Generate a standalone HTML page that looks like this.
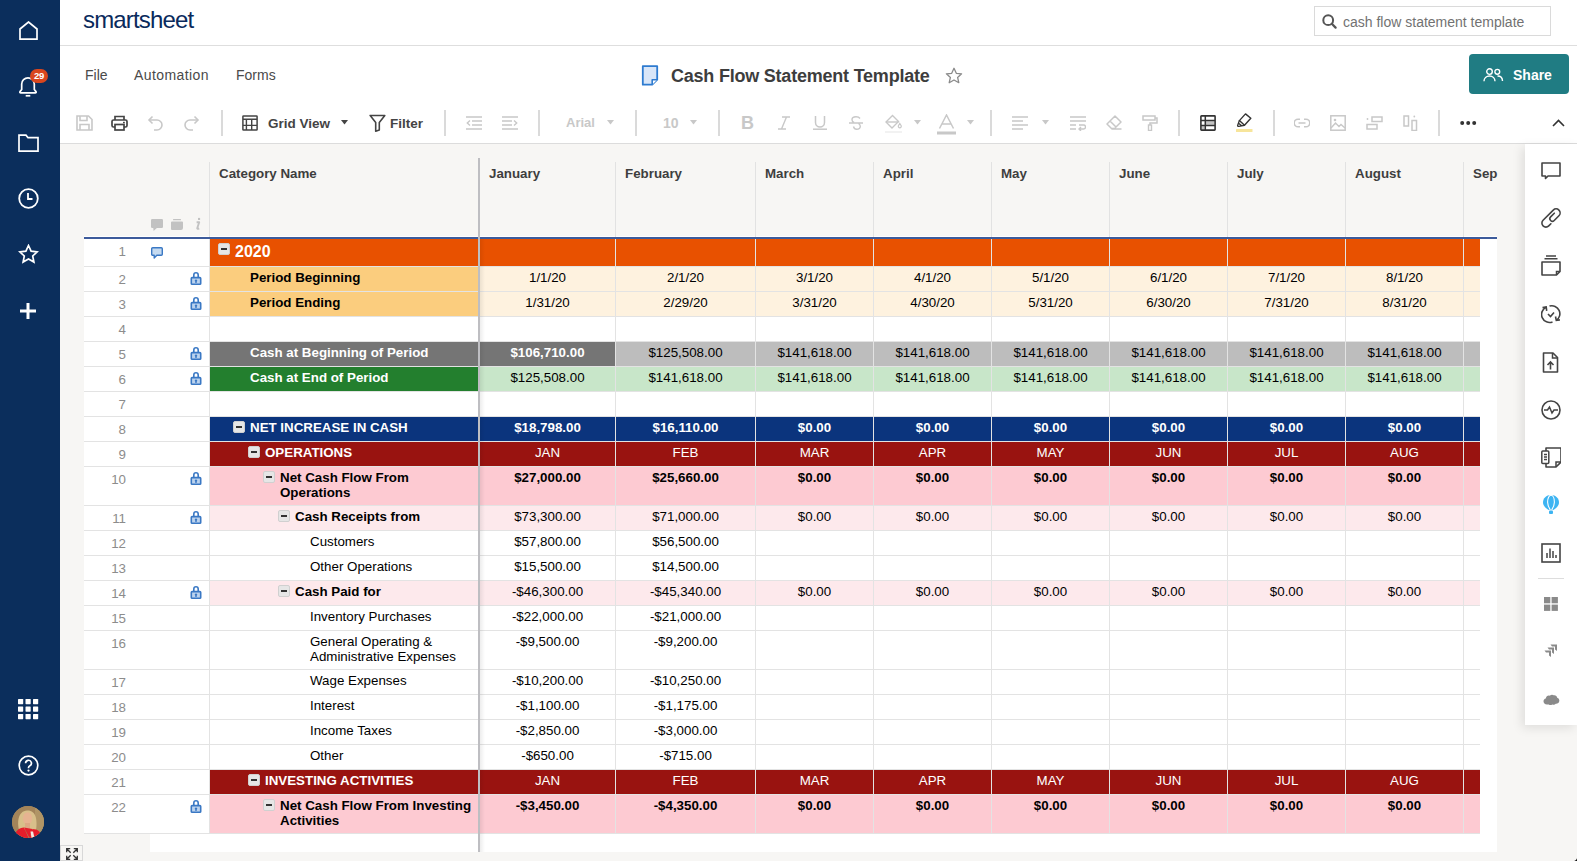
<!DOCTYPE html><html><head><meta charset="utf-8"><style>
*{margin:0;padding:0;box-sizing:border-box}
html,body{width:1577px;height:861px;overflow:hidden;background:#F7F6F4;font-family:"Liberation Sans", sans-serif;position:relative}
.a{position:absolute}
.t{position:absolute;white-space:nowrap;line-height:15px}
.cell{position:absolute;overflow:hidden}
.box{position:absolute;width:12px;height:12px;background:#E6E6E6;border-radius:2px;border:1px solid #D0D0D0}
.box:after{content:"";position:absolute;left:2px;top:4px;width:6px;height:2px;background:#333}

</style></head><body>
<div class="a" style="left:60px;top:0;width:1517px;height:46px;background:#fff;border-bottom:1px solid #DEDEDE"></div>
<div class="t" style="left:83px;top:5px;font-size:24px;line-height:30px;color:#0A2A5C;letter-spacing:-0.85px">smartsheet</div>
<div class="a" style="left:1314px;top:6px;width:237px;height:30px;border:1px solid #DADADA;background:#fff"></div>
<svg width="15" height="15" viewBox="0 0 15 15" class="a" style="left:1322px;top:14px"><circle cx="6.2" cy="6.2" r="4.9" fill="none" stroke="#555" stroke-width="2"/><path d="M9.8 9.8L13.6 13.6" stroke="#555" stroke-width="2.2" stroke-linecap="round"/></svg>
<div class="t" style="left:1343px;top:15px;font-size:14px;color:#727272">cash flow statement template</div>
<div class="a" style="left:60px;top:46px;width:1517px;height:98px;background:#fff;border-bottom:1px solid #DCDCDC"></div>
<div class="t" style="left:85px;top:68px;font-size:14px;color:#4A4A4A">File</div>
<div class="t" style="left:134px;top:68px;font-size:14px;color:#4A4A4A;letter-spacing:0.4px">Automation</div>
<div class="t" style="left:236px;top:68px;font-size:14px;color:#4A4A4A">Forms</div>
<svg width="18" height="21" viewBox="0 0 18 21" class="a" style="left:641px;top:65px"><path d="M1.8 1.2h14.4v13.5l-5 5H1.8z" fill="#D9E6F8" stroke="#2E7BD0" stroke-width="1.8" stroke-linejoin="round"/><path d="M16.2 14.7h-5v5" fill="#fff" stroke="#2E7BD0" stroke-width="1.6" stroke-linejoin="round"/></svg>
<div class="t" style="left:671px;top:65px;font-size:18px;line-height:22px;font-weight:bold;color:#3D3D3D;letter-spacing:-0.22px">Cash Flow Statement Template</div>
<svg width="18" height="18" viewBox="0 0 18 18" class="a" style="left:945px;top:67px"><path d="M9 1.3l2.3 5 5.3.5-4 3.6 1.2 5.3L9 13l-4.8 2.7 1.2-5.3-4-3.6 5.3-.5z" fill="none" stroke="#8A8A8A" stroke-width="1.3" stroke-linejoin="round"/></svg>
<div class="a" style="left:1469px;top:54px;width:100px;height:40px;background:#207C83;border-radius:4px"></div>
<svg width="21" height="14" viewBox="0 0 21 14" class="a" style="left:1483px;top:68px"><circle cx="6.5" cy="3.6" r="2.8" fill="none" stroke="#fff" stroke-width="1.4"/><path d="M1 13.3c0-3.2 2.4-5.3 5.5-5.3s5.5 2.1 5.5 5.3" fill="none" stroke="#fff" stroke-width="1.4"/><circle cx="14.3" cy="3.8" r="2.4" fill="none" stroke="#fff" stroke-width="1.4"/><path d="M14.5 8c2.9 0 5 1.9 5 5" fill="none" stroke="#fff" stroke-width="1.4"/></svg>
<div class="t" style="left:1513px;top:68px;font-size:14px;font-weight:bold;color:#fff">Share</div>
<svg width="17" height="16" viewBox="0 0 17 16" class="a" style="left:76px;top:115px"><path d="M1 1h11.5L16 4.5V15H1z" fill="none" stroke="#C8C8C8" stroke-width="1.6"/><path d="M4 1v4.5h7V1M4 15V9.5h9V15" fill="none" stroke="#C8C8C8" stroke-width="1.6"/></svg>
<svg width="17" height="16" viewBox="0 0 17 16" class="a" style="left:111px;top:115px"><path d="M4 5V1.5h9V5" fill="none" stroke="#444" stroke-width="1.7"/><rect x="1" y="5" width="15" height="7" rx="1.5" fill="none" stroke="#444" stroke-width="1.7"/><rect x="4" y="9.5" width="9" height="5.5" fill="#fff" stroke="#444" stroke-width="1.7"/><rect x="12" y="6.8" width="1.8" height="1.5" fill="#444"/></svg>
<svg width="17" height="16" viewBox="0 0 17 16" class="a" style="left:147px;top:115px"><path d="M5.5 1.5L2 5l3.5 3.5" fill="none" stroke="#C8C8C8" stroke-width="1.6"/><path d="M2.3 5H10a5 5 0 0 1 0 10H7" fill="none" stroke="#C8C8C8" stroke-width="1.6"/></svg>
<svg width="17" height="16" viewBox="0 0 17 16" class="a" style="left:183px;top:115px"><path d="M11.5 1.5L15 5l-3.5 3.5" fill="none" stroke="#C8C8C8" stroke-width="1.6"/><path d="M14.7 5H7a5 5 0 0 0 0 10h3" fill="none" stroke="#C8C8C8" stroke-width="1.6"/></svg>
<div class="a" style="left:221px;top:110px;width:2px;height:26px;background:#DADADA"></div>
<svg width="16" height="16" viewBox="0 0 16 16" class="a" style="left:242px;top:115px"><rect x="0.9" y="0.9" width="14.2" height="14.2" rx="0.6" fill="none" stroke="#444" stroke-width="1.5"/><path d="M1 4.2h14M1 10.4h14M4.4 4.2V15M9.7 4.2V15" stroke="#444" stroke-width="1.4"/></svg>
<div class="t" style="left:268px;top:116px;font-size:13.5px;font-weight:bold;color:#444">Grid View</div>
<svg width="7" height="5" viewBox="0 0 7 5" class="a" style="left:341px;top:120px"><path d="M0 0h7L3.5 4.5z" fill="#444"/></svg>
<svg width="17" height="18" viewBox="0 0 17 18" class="a" style="left:369px;top:114px"><path d="M1.2 1.5h14.6l-5.5 7v7.5l-3.6 1.2V8.5z" fill="none" stroke="#444" stroke-width="1.6" stroke-linejoin="round"/></svg>
<div class="t" style="left:390px;top:116px;font-size:13.5px;font-weight:bold;color:#444">Filter</div>
<div class="a" style="left:444px;top:110px;width:2px;height:26px;background:#DADADA"></div>
<svg width="16" height="14" viewBox="0 0 16 14" class="a" style="left:466px;top:116px"><path d="M0 1h16M6 5h10M6 9h10M0 13h16" stroke="#C8C8C8" stroke-width="1.3"/><path d="M4 4.5L1.3 7 4 9.5" fill="none" stroke="#C8C8C8" stroke-width="1.4"/></svg>
<svg width="16" height="14" viewBox="0 0 16 14" class="a" style="left:502px;top:116px"><path d="M0 1h16M0 5h10M0 9h10M0 13h16" stroke="#C8C8C8" stroke-width="1.3"/><path d="M12 4.5L14.7 7 12 9.5" fill="none" stroke="#C8C8C8" stroke-width="1.4"/></svg>
<div class="a" style="left:538px;top:110px;width:2px;height:26px;background:#DADADA"></div>
<div class="t" style="left:566px;top:115px;font-size:13px;font-weight:bold;color:#C8C8C8">Arial</div>
<svg width="7" height="5" viewBox="0 0 7 5" class="a" style="left:607px;top:120px"><path d="M0 0h7L3.5 4.5z" fill="#C8C8C8"/></svg>
<div class="a" style="left:635px;top:110px;width:2px;height:26px;background:#DADADA"></div>
<div class="t" style="left:663px;top:116px;font-size:14px;font-weight:bold;color:#C8C8C8">10</div>
<svg width="7" height="5" viewBox="0 0 7 5" class="a" style="left:690px;top:120px"><path d="M0 0h7L3.5 4.5z" fill="#C8C8C8"/></svg>
<div class="a" style="left:718px;top:110px;width:2px;height:26px;background:#DADADA"></div>
<div class="t" style="left:741px;top:114px;font-size:18px;line-height:18px;font-weight:bold;color:#C8C8C8">B</div>
<svg width="12" height="14" viewBox="0 0 12 14" class="a" style="left:778px;top:116px"><path d="M4 1h8M0 13h8M8.5 1L3.5 13" stroke="#C8C8C8" stroke-width="1.4" fill="none"/></svg>
<svg width="14" height="14" viewBox="0 0 14 14" class="a" style="left:813px;top:116px"><path d="M2.5 0v6.5a4.5 4.5 0 0 0 9 0V0" stroke="#C8C8C8" stroke-width="1.5" fill="none"/><path d="M0 13.2h14" stroke="#C8C8C8" stroke-width="1.5"/></svg>
<svg width="14" height="14" viewBox="0 0 14 14" class="a" style="left:849px;top:116px"><path d="M11 2.5C10 1 8.8.8 7 .8 4.5.8 3 2 3 3.8c0 1.5 1 2.2 2 2.7M4.5 10.5c.5 1.8 1.8 2.7 3 2.7 2.5 0 3.8-1.3 3.8-3 0-1.2-.6-2-1.8-2.7M0 7h14" stroke="#C8C8C8" stroke-width="1.4" fill="none"/></svg>
<svg width="17" height="19" viewBox="0 0 17 19" class="a" style="left:885px;top:114px"><path d="M7.5 1.5L1 8l6 6 6.5-6.5z" stroke="#C8C8C8" stroke-width="1.4" fill="none"/><path d="M1 8h12.5" stroke="#C8C8C8" stroke-width="1.4"/><path d="M14.8 9.5l1.4 2.3a1.5 1.5 0 1 1-2.8 0z" stroke="#C8C8C8" stroke-width="1.2" fill="none"/><rect x="0" y="17" width="17" height="2" fill="#F2F2F2"/></svg>
<svg width="7" height="5" viewBox="0 0 7 5" class="a" style="left:914px;top:120px"><path d="M0 0h7L3.5 4.5z" fill="#C8C8C8"/></svg>
<svg width="19" height="21" viewBox="0 0 19 21" class="a" style="left:937px;top:114px"><path d="M2.5 14.5L9.5 1l7 13.5M5 10h9" stroke="#C8C8C8" stroke-width="1.5" fill="none"/><rect x="0" y="17.5" width="19" height="3" fill="#C8C8C8"/></svg>
<svg width="7" height="5" viewBox="0 0 7 5" class="a" style="left:967px;top:120px"><path d="M0 0h7L3.5 4.5z" fill="#C8C8C8"/></svg>
<div class="a" style="left:990px;top:110px;width:2px;height:26px;background:#DADADA"></div>
<svg width="16" height="14" viewBox="0 0 16 14" class="a" style="left:1012px;top:116px"><path d="M0 1h16M0 5h11M0 9h16M0 13h11" stroke="#C8C8C8" stroke-width="1.5"/></svg>
<svg width="7" height="5" viewBox="0 0 7 5" class="a" style="left:1042px;top:120px"><path d="M0 0h7L3.5 4.5z" fill="#C8C8C8"/></svg>
<svg width="16" height="15" viewBox="0 0 16 15" class="a" style="left:1070px;top:116px"><path d="M0 1h16M0 5h16M0 9h6M0 13h6" stroke="#C8C8C8" stroke-width="1.5"/><path d="M9 9h4.5a2 2 0 0 1 0 4H10M11 11l-2 2 2 2" stroke="#C8C8C8" stroke-width="1.4" fill="none"/></svg>
<svg width="16" height="15" viewBox="0 0 16 15" class="a" style="left:1106px;top:115px"><path d="M5.5 13.5L1 9l8-8 6 6-6.5 6.5zM4 6l6 6M5.5 14h10" stroke="#C8C8C8" stroke-width="1.5" fill="none" stroke-linejoin="round"/></svg>
<svg width="16" height="16" viewBox="0 0 16 16" class="a" style="left:1142px;top:115px"><rect x="1" y="1" width="12" height="4" stroke="#C8C8C8" stroke-width="1.5" fill="none"/><path d="M13 3h2v5H8v2" stroke="#C8C8C8" stroke-width="1.5" fill="none"/><rect x="6.5" y="10" width="3" height="5.5" stroke="#C8C8C8" stroke-width="1.4" fill="none"/></svg>
<div class="a" style="left:1178px;top:110px;width:2px;height:26px;background:#DADADA"></div>
<svg width="16" height="16" viewBox="0 0 16 16" class="a" style="left:1200px;top:115px"><rect x="6" y="6.2" width="8.4" height="3.6" fill="#C4C4C4"/><rect x="1.6" y="11.2" width="3" height="3.2" fill="#C4C4C4"/><rect x="0.9" y="0.9" width="14.2" height="14.2" rx="0.6" fill="none" stroke="#333" stroke-width="1.6"/><path d="M1 5.4h14M1 10.5h14M5.3 1v14" stroke="#333" stroke-width="1.5"/></svg>
<svg width="18" height="20" viewBox="0 0 18 20" class="a" style="left:1236px;top:113px"><path d="M3.4 7.6L9.5 0.9 14.8 5.3 8.5 12.3z" fill="none" stroke="#333" stroke-width="1.4" stroke-linejoin="round"/><path d="M3.4 7.6L1.6 12.4Q1.6 13.6 2.8 13.4L8.5 12.3M2.6 10.2l3.4 2.7" fill="none" stroke="#333" stroke-width="1.3" stroke-linejoin="round"/><rect x="0" y="15.9" width="16.5" height="3" rx="0.5" fill="#F7E59B"/></svg>
<div class="a" style="left:1273px;top:110px;width:2px;height:26px;background:#DADADA"></div>
<svg width="16" height="10" viewBox="0 0 16 10" class="a" style="left:1294px;top:118px"><path d="M6 1.2H4a3.8 3.8 0 0 0 0 7.6h2M10 1.2h2a3.8 3.8 0 0 1 0 7.6h-2M4.5 5h7" stroke="#C8C8C8" stroke-width="1.5" fill="none"/></svg>
<svg width="16" height="16" viewBox="0 0 16 16" class="a" style="left:1330px;top:115px"><rect x="0.8" y="0.8" width="14.4" height="14.4" stroke="#C8C8C8" stroke-width="1.5" fill="none"/><path d="M1 13l4.5-5 3.5 3.5 2-2 4 3.5" stroke="#C8C8C8" stroke-width="1.4" fill="none"/><circle cx="5" cy="5" r="1.3" fill="#C8C8C8"/></svg>
<svg width="17" height="14" viewBox="0 0 17 14" class="a" style="left:1366px;top:116px"><rect x="6" y="1" width="10" height="4.5" stroke="#C8C8C8" stroke-width="1.5" fill="none"/><rect x="1" y="8.5" width="10" height="4.5" stroke="#C8C8C8" stroke-width="1.5" fill="none"/><circle cx="1.5" cy="3" r="0.9" fill="#C8C8C8"/></svg>
<svg width="15" height="16" viewBox="0 0 15 16" class="a" style="left:1403px;top:115px"><rect x="1" y="1" width="4.5" height="10" stroke="#C8C8C8" stroke-width="1.5" fill="none"/><rect x="9" y="5.5" width="4.5" height="10" stroke="#C8C8C8" stroke-width="1.5" fill="none"/><circle cx="11.3" cy="1.5" r="0.9" fill="#C8C8C8"/></svg>
<div class="a" style="left:1438px;top:110px;width:2px;height:26px;background:#DADADA"></div>
<svg width="17" height="6" viewBox="0 0 17 6" class="a" style="left:1460px;top:120px"><circle cx="2.2" cy="3" r="2" fill="#333"/><circle cx="8.2" cy="3" r="2" fill="#333"/><circle cx="14.2" cy="3" r="2" fill="#333"/></svg>
<svg width="13" height="8" viewBox="0 0 13 8" class="a" style="left:1552px;top:119px"><path d="M1 7l5.5-5.5L12 7" stroke="#333" stroke-width="1.6" fill="none"/></svg>
<div class="a" style="left:84px;top:144px;width:1413px;height:92px;background:#F7F6F4"></div>
<div class="a" style="left:84px;top:236px;width:1413px;height:1px;background:#fff"></div>
<div class="a" style="left:615px;top:162px;width:1px;height:75px;background:#E2E2E2"></div>
<div class="a" style="left:755px;top:162px;width:1px;height:75px;background:#E2E2E2"></div>
<div class="a" style="left:873px;top:162px;width:1px;height:75px;background:#E2E2E2"></div>
<div class="a" style="left:991px;top:162px;width:1px;height:75px;background:#E2E2E2"></div>
<div class="a" style="left:1109px;top:162px;width:1px;height:75px;background:#E2E2E2"></div>
<div class="a" style="left:1227px;top:162px;width:1px;height:75px;background:#E2E2E2"></div>
<div class="a" style="left:1345px;top:162px;width:1px;height:75px;background:#E2E2E2"></div>
<div class="a" style="left:1463px;top:162px;width:1px;height:75px;background:#E2E2E2"></div>
<div class="a" style="left:209px;top:162px;width:1px;height:75px;background:#E2E2E2"></div>
<div class="t" style="left:219px;top:166px;font-size:13.333px;font-weight:bold;color:#3E3E3E">Category Name</div>
<div class="t" style="left:489px;top:166px;font-size:13.333px;font-weight:bold;color:#3E3E3E">January</div>
<div class="t" style="left:625px;top:166px;font-size:13.333px;font-weight:bold;color:#3E3E3E">February</div>
<div class="t" style="left:765px;top:166px;font-size:13.333px;font-weight:bold;color:#3E3E3E">March</div>
<div class="t" style="left:883px;top:166px;font-size:13.333px;font-weight:bold;color:#3E3E3E">April</div>
<div class="t" style="left:1001px;top:166px;font-size:13.333px;font-weight:bold;color:#3E3E3E">May</div>
<div class="t" style="left:1119px;top:166px;font-size:13.333px;font-weight:bold;color:#3E3E3E">June</div>
<div class="t" style="left:1237px;top:166px;font-size:13.333px;font-weight:bold;color:#3E3E3E">July</div>
<div class="t" style="left:1355px;top:166px;font-size:13.333px;font-weight:bold;color:#3E3E3E">August</div>
<div class="t" style="left:1473px;top:166px;font-size:13.333px;font-weight:bold;color:#3E3E3E">Sep</div>
<svg width="14" height="14" viewBox="0 0 14 14" class="a" style="left:150px;top:218px"><rect x="1" y="1" width="12" height="9" rx="1.2" fill="#C2C2C2"/><path d="M3.2 9.5L3.6 13 7.4 9.5z" fill="#C2C2C2"/></svg>
<svg width="14" height="13" viewBox="0 0 14 13" class="a" style="left:170px;top:218px"><rect x="3" y="0.9" width="8" height="1.4" rx="0.5" fill="#C2C2C2"/><path d="M1 4.5a1 1 0 0 1 1-1h10a1 1 0 0 1 1 1V10a2 2 0 0 1-2 2H2a1 1 0 0 1-1-1z" fill="#C2C2C2"/></svg>
<svg width="7" height="14" viewBox="0 0 7 14" class="a" style="left:195px;top:217px"><rect x="3" y="0.9" width="2.1" height="2.1" fill="#C2C2C2"/><path d="M1.6 5.3h2.6L2.3 11c-.3.9.3 1.2 1.9.3" fill="none" stroke="#C2C2C2" stroke-width="1.9" stroke-linejoin="round"/></svg>
<div class="a" style="left:84px;top:237px;width:1413px;height:2px;background:#3D5B9B"></div>
<div class="a" style="left:1480px;top:239px;width:17px;height:613px;background:#fff"></div>
<div class="a" style="left:150px;top:834px;width:1347px;height:18px;background:#fff"></div>
<div class="a" style="left:84px;top:239px;width:125px;height:27px;background:#fff"></div>
<div class="a" style="left:84px;top:266px;width:1396px;height:1px;background:#E3E3E3"></div>
<div class="t" style="left:84px;width:42px;text-align:right;top:244px;font-size:13.333px;color:#8C8C8C">1</div>
<div class="a" style="left:151px;top:245px"><svg width="12" height="12" viewBox="0 0 12 12" ><path d="M1.7 0.7h8.6a1 1 0 0 1 1 1v5.6a1 1 0 0 1-1 1H5.8L3.2 10.9V8.3H1.7a1 1 0 0 1-1-1V1.7a1 1 0 0 1 1-1z" fill="#C5DAF0" stroke="#3A78C4" stroke-width="1.4" stroke-linejoin="round"/></svg></div>
<div class="a" style="left:209px;top:239px;width:1px;height:28px;background:#E3E3E3"></div>
<div class="a" style="left:210px;top:239px;width:268px;height:27px;background:#E85100"></div>
<div class="box" style="left:218px;top:243px"></div>
<div class="t" style="left:235px;top:243px;font-size:16px;line-height:18px;font-weight:bold;color:#fff">2020</div>
<div class="a" style="left:480px;top:239px;width:135px;height:27px;background:#E85100"></div>
<div class="a" style="left:616px;top:239px;width:139px;height:27px;background:#E85100"></div>
<div class="a" style="left:756px;top:239px;width:117px;height:27px;background:#E85100"></div>
<div class="a" style="left:874px;top:239px;width:117px;height:27px;background:#E85100"></div>
<div class="a" style="left:992px;top:239px;width:117px;height:27px;background:#E85100"></div>
<div class="a" style="left:1110px;top:239px;width:117px;height:27px;background:#E85100"></div>
<div class="a" style="left:1228px;top:239px;width:117px;height:27px;background:#E85100"></div>
<div class="a" style="left:1346px;top:239px;width:117px;height:27px;background:#E85100"></div>
<div class="a" style="left:1464px;top:239px;width:16px;height:27px;background:#E85100"></div>
<div class="a" style="left:615px;top:239px;width:1px;height:28px;background:#E3E3E3"></div>
<div class="a" style="left:755px;top:239px;width:1px;height:28px;background:#E3E3E3"></div>
<div class="a" style="left:873px;top:239px;width:1px;height:28px;background:#E3E3E3"></div>
<div class="a" style="left:991px;top:239px;width:1px;height:28px;background:#E3E3E3"></div>
<div class="a" style="left:1109px;top:239px;width:1px;height:28px;background:#E3E3E3"></div>
<div class="a" style="left:1227px;top:239px;width:1px;height:28px;background:#E3E3E3"></div>
<div class="a" style="left:1345px;top:239px;width:1px;height:28px;background:#E3E3E3"></div>
<div class="a" style="left:1463px;top:239px;width:1px;height:28px;background:#E3E3E3"></div>
<div class="a" style="left:84px;top:267px;width:125px;height:24px;background:#fff"></div>
<div class="a" style="left:84px;top:291px;width:1396px;height:1px;background:#E3E3E3"></div>
<div class="t" style="left:84px;width:42px;text-align:right;top:272px;font-size:13.333px;color:#8C8C8C">2</div>
<div class="a" style="left:190px;top:271px"><svg width="12" height="14" viewBox="0 0 12 14" ><path d="M3.8 7V4a2.2 2.2 0 0 1 4.4 0v3" fill="none" stroke="#3A78C4" stroke-width="1.6"/><rect x="1.3" y="6.6" width="9.4" height="6.6" rx="0.8" fill="#BCD3EE" stroke="#3A78C4" stroke-width="1.6"/><path d="M6 8.4a1.2 1.2 0 0 1 .7 2.2l.3 1.2H5l.3-1.2A1.2 1.2 0 0 1 6 8.4z" fill="#3A78C4"/></svg></div>
<div class="a" style="left:209px;top:267px;width:1px;height:25px;background:#E3E3E3"></div>
<div class="a" style="left:210px;top:267px;width:268px;height:24px;background:#FBCD7E"></div>
<div class="t" style="left:250px;top:270px;font-size:13.333px;line-height:15px;font-weight:bold;color:#000">Period Beginning</div>
<div class="a" style="left:480px;top:267px;width:135px;height:24px;background:#FEF2DF"></div>
<div class="t" style="left:480px;width:135px;text-align:center;top:270px;font-size:13.333px;font-weight:normal;color:#000">1/1/20</div>
<div class="a" style="left:616px;top:267px;width:139px;height:24px;background:#FEF2DF"></div>
<div class="t" style="left:616px;width:139px;text-align:center;top:270px;font-size:13.333px;font-weight:normal;color:#000">2/1/20</div>
<div class="a" style="left:756px;top:267px;width:117px;height:24px;background:#FEF2DF"></div>
<div class="t" style="left:756px;width:117px;text-align:center;top:270px;font-size:13.333px;font-weight:normal;color:#000">3/1/20</div>
<div class="a" style="left:874px;top:267px;width:117px;height:24px;background:#FEF2DF"></div>
<div class="t" style="left:874px;width:117px;text-align:center;top:270px;font-size:13.333px;font-weight:normal;color:#000">4/1/20</div>
<div class="a" style="left:992px;top:267px;width:117px;height:24px;background:#FEF2DF"></div>
<div class="t" style="left:992px;width:117px;text-align:center;top:270px;font-size:13.333px;font-weight:normal;color:#000">5/1/20</div>
<div class="a" style="left:1110px;top:267px;width:117px;height:24px;background:#FEF2DF"></div>
<div class="t" style="left:1110px;width:117px;text-align:center;top:270px;font-size:13.333px;font-weight:normal;color:#000">6/1/20</div>
<div class="a" style="left:1228px;top:267px;width:117px;height:24px;background:#FEF2DF"></div>
<div class="t" style="left:1228px;width:117px;text-align:center;top:270px;font-size:13.333px;font-weight:normal;color:#000">7/1/20</div>
<div class="a" style="left:1346px;top:267px;width:117px;height:24px;background:#FEF2DF"></div>
<div class="t" style="left:1346px;width:117px;text-align:center;top:270px;font-size:13.333px;font-weight:normal;color:#000">8/1/20</div>
<div class="a" style="left:1464px;top:267px;width:16px;height:24px;background:#FEF2DF"></div>
<div class="a" style="left:615px;top:267px;width:1px;height:25px;background:#E3E3E3"></div>
<div class="a" style="left:755px;top:267px;width:1px;height:25px;background:#E3E3E3"></div>
<div class="a" style="left:873px;top:267px;width:1px;height:25px;background:#E3E3E3"></div>
<div class="a" style="left:991px;top:267px;width:1px;height:25px;background:#E3E3E3"></div>
<div class="a" style="left:1109px;top:267px;width:1px;height:25px;background:#E3E3E3"></div>
<div class="a" style="left:1227px;top:267px;width:1px;height:25px;background:#E3E3E3"></div>
<div class="a" style="left:1345px;top:267px;width:1px;height:25px;background:#E3E3E3"></div>
<div class="a" style="left:1463px;top:267px;width:1px;height:25px;background:#E3E3E3"></div>
<div class="a" style="left:84px;top:292px;width:125px;height:24px;background:#fff"></div>
<div class="a" style="left:84px;top:316px;width:1396px;height:1px;background:#E3E3E3"></div>
<div class="t" style="left:84px;width:42px;text-align:right;top:297px;font-size:13.333px;color:#8C8C8C">3</div>
<div class="a" style="left:190px;top:296px"><svg width="12" height="14" viewBox="0 0 12 14" ><path d="M3.8 7V4a2.2 2.2 0 0 1 4.4 0v3" fill="none" stroke="#3A78C4" stroke-width="1.6"/><rect x="1.3" y="6.6" width="9.4" height="6.6" rx="0.8" fill="#BCD3EE" stroke="#3A78C4" stroke-width="1.6"/><path d="M6 8.4a1.2 1.2 0 0 1 .7 2.2l.3 1.2H5l.3-1.2A1.2 1.2 0 0 1 6 8.4z" fill="#3A78C4"/></svg></div>
<div class="a" style="left:209px;top:292px;width:1px;height:25px;background:#E3E3E3"></div>
<div class="a" style="left:210px;top:292px;width:268px;height:24px;background:#FBCD7E"></div>
<div class="t" style="left:250px;top:295px;font-size:13.333px;line-height:15px;font-weight:bold;color:#000">Period Ending</div>
<div class="a" style="left:480px;top:292px;width:135px;height:24px;background:#FEF2DF"></div>
<div class="t" style="left:480px;width:135px;text-align:center;top:295px;font-size:13.333px;font-weight:normal;color:#000">1/31/20</div>
<div class="a" style="left:616px;top:292px;width:139px;height:24px;background:#FEF2DF"></div>
<div class="t" style="left:616px;width:139px;text-align:center;top:295px;font-size:13.333px;font-weight:normal;color:#000">2/29/20</div>
<div class="a" style="left:756px;top:292px;width:117px;height:24px;background:#FEF2DF"></div>
<div class="t" style="left:756px;width:117px;text-align:center;top:295px;font-size:13.333px;font-weight:normal;color:#000">3/31/20</div>
<div class="a" style="left:874px;top:292px;width:117px;height:24px;background:#FEF2DF"></div>
<div class="t" style="left:874px;width:117px;text-align:center;top:295px;font-size:13.333px;font-weight:normal;color:#000">4/30/20</div>
<div class="a" style="left:992px;top:292px;width:117px;height:24px;background:#FEF2DF"></div>
<div class="t" style="left:992px;width:117px;text-align:center;top:295px;font-size:13.333px;font-weight:normal;color:#000">5/31/20</div>
<div class="a" style="left:1110px;top:292px;width:117px;height:24px;background:#FEF2DF"></div>
<div class="t" style="left:1110px;width:117px;text-align:center;top:295px;font-size:13.333px;font-weight:normal;color:#000">6/30/20</div>
<div class="a" style="left:1228px;top:292px;width:117px;height:24px;background:#FEF2DF"></div>
<div class="t" style="left:1228px;width:117px;text-align:center;top:295px;font-size:13.333px;font-weight:normal;color:#000">7/31/20</div>
<div class="a" style="left:1346px;top:292px;width:117px;height:24px;background:#FEF2DF"></div>
<div class="t" style="left:1346px;width:117px;text-align:center;top:295px;font-size:13.333px;font-weight:normal;color:#000">8/31/20</div>
<div class="a" style="left:1464px;top:292px;width:16px;height:24px;background:#FEF2DF"></div>
<div class="a" style="left:615px;top:292px;width:1px;height:25px;background:#E3E3E3"></div>
<div class="a" style="left:755px;top:292px;width:1px;height:25px;background:#E3E3E3"></div>
<div class="a" style="left:873px;top:292px;width:1px;height:25px;background:#E3E3E3"></div>
<div class="a" style="left:991px;top:292px;width:1px;height:25px;background:#E3E3E3"></div>
<div class="a" style="left:1109px;top:292px;width:1px;height:25px;background:#E3E3E3"></div>
<div class="a" style="left:1227px;top:292px;width:1px;height:25px;background:#E3E3E3"></div>
<div class="a" style="left:1345px;top:292px;width:1px;height:25px;background:#E3E3E3"></div>
<div class="a" style="left:1463px;top:292px;width:1px;height:25px;background:#E3E3E3"></div>
<div class="a" style="left:84px;top:317px;width:125px;height:24px;background:#fff"></div>
<div class="a" style="left:84px;top:341px;width:1396px;height:1px;background:#E3E3E3"></div>
<div class="t" style="left:84px;width:42px;text-align:right;top:322px;font-size:13.333px;color:#8C8C8C">4</div>
<div class="a" style="left:209px;top:317px;width:1px;height:25px;background:#E3E3E3"></div>
<div class="a" style="left:210px;top:317px;width:268px;height:24px;background:#FFFFFF"></div>
<div class="a" style="left:480px;top:317px;width:135px;height:24px;background:#FFFFFF"></div>
<div class="a" style="left:616px;top:317px;width:139px;height:24px;background:#FFFFFF"></div>
<div class="a" style="left:756px;top:317px;width:117px;height:24px;background:#FFFFFF"></div>
<div class="a" style="left:874px;top:317px;width:117px;height:24px;background:#FFFFFF"></div>
<div class="a" style="left:992px;top:317px;width:117px;height:24px;background:#FFFFFF"></div>
<div class="a" style="left:1110px;top:317px;width:117px;height:24px;background:#FFFFFF"></div>
<div class="a" style="left:1228px;top:317px;width:117px;height:24px;background:#FFFFFF"></div>
<div class="a" style="left:1346px;top:317px;width:117px;height:24px;background:#FFFFFF"></div>
<div class="a" style="left:1464px;top:317px;width:16px;height:24px;background:#FFFFFF"></div>
<div class="a" style="left:615px;top:317px;width:1px;height:25px;background:#E3E3E3"></div>
<div class="a" style="left:755px;top:317px;width:1px;height:25px;background:#E3E3E3"></div>
<div class="a" style="left:873px;top:317px;width:1px;height:25px;background:#E3E3E3"></div>
<div class="a" style="left:991px;top:317px;width:1px;height:25px;background:#E3E3E3"></div>
<div class="a" style="left:1109px;top:317px;width:1px;height:25px;background:#E3E3E3"></div>
<div class="a" style="left:1227px;top:317px;width:1px;height:25px;background:#E3E3E3"></div>
<div class="a" style="left:1345px;top:317px;width:1px;height:25px;background:#E3E3E3"></div>
<div class="a" style="left:1463px;top:317px;width:1px;height:25px;background:#E3E3E3"></div>
<div class="a" style="left:84px;top:342px;width:125px;height:24px;background:#fff"></div>
<div class="a" style="left:84px;top:366px;width:1396px;height:1px;background:#E3E3E3"></div>
<div class="t" style="left:84px;width:42px;text-align:right;top:347px;font-size:13.333px;color:#8C8C8C">5</div>
<div class="a" style="left:190px;top:346px"><svg width="12" height="14" viewBox="0 0 12 14" ><path d="M3.8 7V4a2.2 2.2 0 0 1 4.4 0v3" fill="none" stroke="#3A78C4" stroke-width="1.6"/><rect x="1.3" y="6.6" width="9.4" height="6.6" rx="0.8" fill="#BCD3EE" stroke="#3A78C4" stroke-width="1.6"/><path d="M6 8.4a1.2 1.2 0 0 1 .7 2.2l.3 1.2H5l.3-1.2A1.2 1.2 0 0 1 6 8.4z" fill="#3A78C4"/></svg></div>
<div class="a" style="left:209px;top:342px;width:1px;height:25px;background:#E3E3E3"></div>
<div class="a" style="left:210px;top:342px;width:268px;height:24px;background:#757575"></div>
<div class="t" style="left:250px;top:345px;font-size:13.333px;line-height:15px;font-weight:bold;color:#fff">Cash at Beginning of Period</div>
<div class="a" style="left:480px;top:342px;width:135px;height:24px;background:#757575"></div>
<div class="t" style="left:480px;width:135px;text-align:center;top:345px;font-size:13.333px;font-weight:bold;color:#fff">$106,710.00</div>
<div class="a" style="left:616px;top:342px;width:139px;height:24px;background:#BDBDBD"></div>
<div class="t" style="left:616px;width:139px;text-align:center;top:345px;font-size:13.333px;font-weight:normal;color:#000">$125,508.00</div>
<div class="a" style="left:756px;top:342px;width:117px;height:24px;background:#BDBDBD"></div>
<div class="t" style="left:756px;width:117px;text-align:center;top:345px;font-size:13.333px;font-weight:normal;color:#000">$141,618.00</div>
<div class="a" style="left:874px;top:342px;width:117px;height:24px;background:#BDBDBD"></div>
<div class="t" style="left:874px;width:117px;text-align:center;top:345px;font-size:13.333px;font-weight:normal;color:#000">$141,618.00</div>
<div class="a" style="left:992px;top:342px;width:117px;height:24px;background:#BDBDBD"></div>
<div class="t" style="left:992px;width:117px;text-align:center;top:345px;font-size:13.333px;font-weight:normal;color:#000">$141,618.00</div>
<div class="a" style="left:1110px;top:342px;width:117px;height:24px;background:#BDBDBD"></div>
<div class="t" style="left:1110px;width:117px;text-align:center;top:345px;font-size:13.333px;font-weight:normal;color:#000">$141,618.00</div>
<div class="a" style="left:1228px;top:342px;width:117px;height:24px;background:#BDBDBD"></div>
<div class="t" style="left:1228px;width:117px;text-align:center;top:345px;font-size:13.333px;font-weight:normal;color:#000">$141,618.00</div>
<div class="a" style="left:1346px;top:342px;width:117px;height:24px;background:#BDBDBD"></div>
<div class="t" style="left:1346px;width:117px;text-align:center;top:345px;font-size:13.333px;font-weight:normal;color:#000">$141,618.00</div>
<div class="a" style="left:1464px;top:342px;width:16px;height:24px;background:#BDBDBD"></div>
<div class="a" style="left:615px;top:342px;width:1px;height:25px;background:#E3E3E3"></div>
<div class="a" style="left:755px;top:342px;width:1px;height:25px;background:#E3E3E3"></div>
<div class="a" style="left:873px;top:342px;width:1px;height:25px;background:#E3E3E3"></div>
<div class="a" style="left:991px;top:342px;width:1px;height:25px;background:#E3E3E3"></div>
<div class="a" style="left:1109px;top:342px;width:1px;height:25px;background:#E3E3E3"></div>
<div class="a" style="left:1227px;top:342px;width:1px;height:25px;background:#E3E3E3"></div>
<div class="a" style="left:1345px;top:342px;width:1px;height:25px;background:#E3E3E3"></div>
<div class="a" style="left:1463px;top:342px;width:1px;height:25px;background:#E3E3E3"></div>
<div class="a" style="left:84px;top:367px;width:125px;height:24px;background:#fff"></div>
<div class="a" style="left:84px;top:391px;width:1396px;height:1px;background:#E3E3E3"></div>
<div class="t" style="left:84px;width:42px;text-align:right;top:372px;font-size:13.333px;color:#8C8C8C">6</div>
<div class="a" style="left:190px;top:371px"><svg width="12" height="14" viewBox="0 0 12 14" ><path d="M3.8 7V4a2.2 2.2 0 0 1 4.4 0v3" fill="none" stroke="#3A78C4" stroke-width="1.6"/><rect x="1.3" y="6.6" width="9.4" height="6.6" rx="0.8" fill="#BCD3EE" stroke="#3A78C4" stroke-width="1.6"/><path d="M6 8.4a1.2 1.2 0 0 1 .7 2.2l.3 1.2H5l.3-1.2A1.2 1.2 0 0 1 6 8.4z" fill="#3A78C4"/></svg></div>
<div class="a" style="left:209px;top:367px;width:1px;height:25px;background:#E3E3E3"></div>
<div class="a" style="left:210px;top:367px;width:268px;height:24px;background:#237F2E"></div>
<div class="t" style="left:250px;top:370px;font-size:13.333px;line-height:15px;font-weight:bold;color:#fff">Cash at End of Period</div>
<div class="a" style="left:480px;top:367px;width:135px;height:24px;background:#C8E6C9"></div>
<div class="t" style="left:480px;width:135px;text-align:center;top:370px;font-size:13.333px;font-weight:normal;color:#000">$125,508.00</div>
<div class="a" style="left:616px;top:367px;width:139px;height:24px;background:#C8E6C9"></div>
<div class="t" style="left:616px;width:139px;text-align:center;top:370px;font-size:13.333px;font-weight:normal;color:#000">$141,618.00</div>
<div class="a" style="left:756px;top:367px;width:117px;height:24px;background:#C8E6C9"></div>
<div class="t" style="left:756px;width:117px;text-align:center;top:370px;font-size:13.333px;font-weight:normal;color:#000">$141,618.00</div>
<div class="a" style="left:874px;top:367px;width:117px;height:24px;background:#C8E6C9"></div>
<div class="t" style="left:874px;width:117px;text-align:center;top:370px;font-size:13.333px;font-weight:normal;color:#000">$141,618.00</div>
<div class="a" style="left:992px;top:367px;width:117px;height:24px;background:#C8E6C9"></div>
<div class="t" style="left:992px;width:117px;text-align:center;top:370px;font-size:13.333px;font-weight:normal;color:#000">$141,618.00</div>
<div class="a" style="left:1110px;top:367px;width:117px;height:24px;background:#C8E6C9"></div>
<div class="t" style="left:1110px;width:117px;text-align:center;top:370px;font-size:13.333px;font-weight:normal;color:#000">$141,618.00</div>
<div class="a" style="left:1228px;top:367px;width:117px;height:24px;background:#C8E6C9"></div>
<div class="t" style="left:1228px;width:117px;text-align:center;top:370px;font-size:13.333px;font-weight:normal;color:#000">$141,618.00</div>
<div class="a" style="left:1346px;top:367px;width:117px;height:24px;background:#C8E6C9"></div>
<div class="t" style="left:1346px;width:117px;text-align:center;top:370px;font-size:13.333px;font-weight:normal;color:#000">$141,618.00</div>
<div class="a" style="left:1464px;top:367px;width:16px;height:24px;background:#C8E6C9"></div>
<div class="a" style="left:615px;top:367px;width:1px;height:25px;background:#E3E3E3"></div>
<div class="a" style="left:755px;top:367px;width:1px;height:25px;background:#E3E3E3"></div>
<div class="a" style="left:873px;top:367px;width:1px;height:25px;background:#E3E3E3"></div>
<div class="a" style="left:991px;top:367px;width:1px;height:25px;background:#E3E3E3"></div>
<div class="a" style="left:1109px;top:367px;width:1px;height:25px;background:#E3E3E3"></div>
<div class="a" style="left:1227px;top:367px;width:1px;height:25px;background:#E3E3E3"></div>
<div class="a" style="left:1345px;top:367px;width:1px;height:25px;background:#E3E3E3"></div>
<div class="a" style="left:1463px;top:367px;width:1px;height:25px;background:#E3E3E3"></div>
<div class="a" style="left:84px;top:392px;width:125px;height:24px;background:#fff"></div>
<div class="a" style="left:84px;top:416px;width:1396px;height:1px;background:#E3E3E3"></div>
<div class="t" style="left:84px;width:42px;text-align:right;top:397px;font-size:13.333px;color:#8C8C8C">7</div>
<div class="a" style="left:209px;top:392px;width:1px;height:25px;background:#E3E3E3"></div>
<div class="a" style="left:210px;top:392px;width:268px;height:24px;background:#FFFFFF"></div>
<div class="a" style="left:480px;top:392px;width:135px;height:24px;background:#FFFFFF"></div>
<div class="a" style="left:616px;top:392px;width:139px;height:24px;background:#FFFFFF"></div>
<div class="a" style="left:756px;top:392px;width:117px;height:24px;background:#FFFFFF"></div>
<div class="a" style="left:874px;top:392px;width:117px;height:24px;background:#FFFFFF"></div>
<div class="a" style="left:992px;top:392px;width:117px;height:24px;background:#FFFFFF"></div>
<div class="a" style="left:1110px;top:392px;width:117px;height:24px;background:#FFFFFF"></div>
<div class="a" style="left:1228px;top:392px;width:117px;height:24px;background:#FFFFFF"></div>
<div class="a" style="left:1346px;top:392px;width:117px;height:24px;background:#FFFFFF"></div>
<div class="a" style="left:1464px;top:392px;width:16px;height:24px;background:#FFFFFF"></div>
<div class="a" style="left:615px;top:392px;width:1px;height:25px;background:#E3E3E3"></div>
<div class="a" style="left:755px;top:392px;width:1px;height:25px;background:#E3E3E3"></div>
<div class="a" style="left:873px;top:392px;width:1px;height:25px;background:#E3E3E3"></div>
<div class="a" style="left:991px;top:392px;width:1px;height:25px;background:#E3E3E3"></div>
<div class="a" style="left:1109px;top:392px;width:1px;height:25px;background:#E3E3E3"></div>
<div class="a" style="left:1227px;top:392px;width:1px;height:25px;background:#E3E3E3"></div>
<div class="a" style="left:1345px;top:392px;width:1px;height:25px;background:#E3E3E3"></div>
<div class="a" style="left:1463px;top:392px;width:1px;height:25px;background:#E3E3E3"></div>
<div class="a" style="left:84px;top:417px;width:125px;height:24px;background:#fff"></div>
<div class="a" style="left:84px;top:441px;width:1396px;height:1px;background:#E3E3E3"></div>
<div class="t" style="left:84px;width:42px;text-align:right;top:422px;font-size:13.333px;color:#8C8C8C">8</div>
<div class="a" style="left:209px;top:417px;width:1px;height:25px;background:#E3E3E3"></div>
<div class="a" style="left:210px;top:417px;width:268px;height:24px;background:#0B347D"></div>
<div class="box" style="left:233px;top:421px"></div>
<div class="t" style="left:250px;top:420px;font-size:13.333px;line-height:15px;font-weight:bold;color:#fff">NET INCREASE IN CASH</div>
<div class="a" style="left:480px;top:417px;width:135px;height:24px;background:#0B347D"></div>
<div class="t" style="left:480px;width:135px;text-align:center;top:420px;font-size:13.333px;font-weight:bold;color:#fff">$18,798.00</div>
<div class="a" style="left:616px;top:417px;width:139px;height:24px;background:#0B347D"></div>
<div class="t" style="left:616px;width:139px;text-align:center;top:420px;font-size:13.333px;font-weight:bold;color:#fff">$16,110.00</div>
<div class="a" style="left:756px;top:417px;width:117px;height:24px;background:#0B347D"></div>
<div class="t" style="left:756px;width:117px;text-align:center;top:420px;font-size:13.333px;font-weight:bold;color:#fff">$0.00</div>
<div class="a" style="left:874px;top:417px;width:117px;height:24px;background:#0B347D"></div>
<div class="t" style="left:874px;width:117px;text-align:center;top:420px;font-size:13.333px;font-weight:bold;color:#fff">$0.00</div>
<div class="a" style="left:992px;top:417px;width:117px;height:24px;background:#0B347D"></div>
<div class="t" style="left:992px;width:117px;text-align:center;top:420px;font-size:13.333px;font-weight:bold;color:#fff">$0.00</div>
<div class="a" style="left:1110px;top:417px;width:117px;height:24px;background:#0B347D"></div>
<div class="t" style="left:1110px;width:117px;text-align:center;top:420px;font-size:13.333px;font-weight:bold;color:#fff">$0.00</div>
<div class="a" style="left:1228px;top:417px;width:117px;height:24px;background:#0B347D"></div>
<div class="t" style="left:1228px;width:117px;text-align:center;top:420px;font-size:13.333px;font-weight:bold;color:#fff">$0.00</div>
<div class="a" style="left:1346px;top:417px;width:117px;height:24px;background:#0B347D"></div>
<div class="t" style="left:1346px;width:117px;text-align:center;top:420px;font-size:13.333px;font-weight:bold;color:#fff">$0.00</div>
<div class="a" style="left:1464px;top:417px;width:16px;height:24px;background:#0B347D"></div>
<div class="a" style="left:615px;top:417px;width:1px;height:25px;background:#E3E3E3"></div>
<div class="a" style="left:755px;top:417px;width:1px;height:25px;background:#E3E3E3"></div>
<div class="a" style="left:873px;top:417px;width:1px;height:25px;background:#E3E3E3"></div>
<div class="a" style="left:991px;top:417px;width:1px;height:25px;background:#E3E3E3"></div>
<div class="a" style="left:1109px;top:417px;width:1px;height:25px;background:#E3E3E3"></div>
<div class="a" style="left:1227px;top:417px;width:1px;height:25px;background:#E3E3E3"></div>
<div class="a" style="left:1345px;top:417px;width:1px;height:25px;background:#E3E3E3"></div>
<div class="a" style="left:1463px;top:417px;width:1px;height:25px;background:#E3E3E3"></div>
<div class="a" style="left:84px;top:442px;width:125px;height:24px;background:#fff"></div>
<div class="a" style="left:84px;top:466px;width:1396px;height:1px;background:#E3E3E3"></div>
<div class="t" style="left:84px;width:42px;text-align:right;top:447px;font-size:13.333px;color:#8C8C8C">9</div>
<div class="a" style="left:209px;top:442px;width:1px;height:25px;background:#E3E3E3"></div>
<div class="a" style="left:210px;top:442px;width:268px;height:24px;background:#991310"></div>
<div class="box" style="left:248px;top:446px"></div>
<div class="t" style="left:265px;top:445px;font-size:13.333px;line-height:15px;font-weight:bold;color:#fff">OPERATIONS</div>
<div class="a" style="left:480px;top:442px;width:135px;height:24px;background:#991310"></div>
<div class="t" style="left:480px;width:135px;text-align:center;top:445px;font-size:13.333px;font-weight:normal;color:#fff">JAN</div>
<div class="a" style="left:616px;top:442px;width:139px;height:24px;background:#991310"></div>
<div class="t" style="left:616px;width:139px;text-align:center;top:445px;font-size:13.333px;font-weight:normal;color:#fff">FEB</div>
<div class="a" style="left:756px;top:442px;width:117px;height:24px;background:#991310"></div>
<div class="t" style="left:756px;width:117px;text-align:center;top:445px;font-size:13.333px;font-weight:normal;color:#fff">MAR</div>
<div class="a" style="left:874px;top:442px;width:117px;height:24px;background:#991310"></div>
<div class="t" style="left:874px;width:117px;text-align:center;top:445px;font-size:13.333px;font-weight:normal;color:#fff">APR</div>
<div class="a" style="left:992px;top:442px;width:117px;height:24px;background:#991310"></div>
<div class="t" style="left:992px;width:117px;text-align:center;top:445px;font-size:13.333px;font-weight:normal;color:#fff">MAY</div>
<div class="a" style="left:1110px;top:442px;width:117px;height:24px;background:#991310"></div>
<div class="t" style="left:1110px;width:117px;text-align:center;top:445px;font-size:13.333px;font-weight:normal;color:#fff">JUN</div>
<div class="a" style="left:1228px;top:442px;width:117px;height:24px;background:#991310"></div>
<div class="t" style="left:1228px;width:117px;text-align:center;top:445px;font-size:13.333px;font-weight:normal;color:#fff">JUL</div>
<div class="a" style="left:1346px;top:442px;width:117px;height:24px;background:#991310"></div>
<div class="t" style="left:1346px;width:117px;text-align:center;top:445px;font-size:13.333px;font-weight:normal;color:#fff">AUG</div>
<div class="a" style="left:1464px;top:442px;width:16px;height:24px;background:#991310"></div>
<div class="a" style="left:615px;top:442px;width:1px;height:25px;background:#E3E3E3"></div>
<div class="a" style="left:755px;top:442px;width:1px;height:25px;background:#E3E3E3"></div>
<div class="a" style="left:873px;top:442px;width:1px;height:25px;background:#E3E3E3"></div>
<div class="a" style="left:991px;top:442px;width:1px;height:25px;background:#E3E3E3"></div>
<div class="a" style="left:1109px;top:442px;width:1px;height:25px;background:#E3E3E3"></div>
<div class="a" style="left:1227px;top:442px;width:1px;height:25px;background:#E3E3E3"></div>
<div class="a" style="left:1345px;top:442px;width:1px;height:25px;background:#E3E3E3"></div>
<div class="a" style="left:1463px;top:442px;width:1px;height:25px;background:#E3E3E3"></div>
<div class="a" style="left:84px;top:467px;width:125px;height:38px;background:#fff"></div>
<div class="a" style="left:84px;top:505px;width:1396px;height:1px;background:#E3E3E3"></div>
<div class="t" style="left:84px;width:42px;text-align:right;top:472px;font-size:13.333px;color:#8C8C8C">10</div>
<div class="a" style="left:190px;top:471px"><svg width="12" height="14" viewBox="0 0 12 14" ><path d="M3.8 7V4a2.2 2.2 0 0 1 4.4 0v3" fill="none" stroke="#3A78C4" stroke-width="1.6"/><rect x="1.3" y="6.6" width="9.4" height="6.6" rx="0.8" fill="#BCD3EE" stroke="#3A78C4" stroke-width="1.6"/><path d="M6 8.4a1.2 1.2 0 0 1 .7 2.2l.3 1.2H5l.3-1.2A1.2 1.2 0 0 1 6 8.4z" fill="#3A78C4"/></svg></div>
<div class="a" style="left:209px;top:467px;width:1px;height:39px;background:#E3E3E3"></div>
<div class="a" style="left:210px;top:467px;width:268px;height:38px;background:#FDCAD2"></div>
<div class="box" style="left:263px;top:471px"></div>
<div class="t" style="left:280px;top:470px;font-size:13.333px;line-height:15px;font-weight:bold;color:#000">Net Cash Flow From<br>Operations</div>
<div class="a" style="left:480px;top:467px;width:135px;height:38px;background:#FDCAD2"></div>
<div class="t" style="left:480px;width:135px;text-align:center;top:470px;font-size:13.333px;font-weight:bold;color:#000">$27,000.00</div>
<div class="a" style="left:616px;top:467px;width:139px;height:38px;background:#FDCAD2"></div>
<div class="t" style="left:616px;width:139px;text-align:center;top:470px;font-size:13.333px;font-weight:bold;color:#000">$25,660.00</div>
<div class="a" style="left:756px;top:467px;width:117px;height:38px;background:#FDCAD2"></div>
<div class="t" style="left:756px;width:117px;text-align:center;top:470px;font-size:13.333px;font-weight:bold;color:#000">$0.00</div>
<div class="a" style="left:874px;top:467px;width:117px;height:38px;background:#FDCAD2"></div>
<div class="t" style="left:874px;width:117px;text-align:center;top:470px;font-size:13.333px;font-weight:bold;color:#000">$0.00</div>
<div class="a" style="left:992px;top:467px;width:117px;height:38px;background:#FDCAD2"></div>
<div class="t" style="left:992px;width:117px;text-align:center;top:470px;font-size:13.333px;font-weight:bold;color:#000">$0.00</div>
<div class="a" style="left:1110px;top:467px;width:117px;height:38px;background:#FDCAD2"></div>
<div class="t" style="left:1110px;width:117px;text-align:center;top:470px;font-size:13.333px;font-weight:bold;color:#000">$0.00</div>
<div class="a" style="left:1228px;top:467px;width:117px;height:38px;background:#FDCAD2"></div>
<div class="t" style="left:1228px;width:117px;text-align:center;top:470px;font-size:13.333px;font-weight:bold;color:#000">$0.00</div>
<div class="a" style="left:1346px;top:467px;width:117px;height:38px;background:#FDCAD2"></div>
<div class="t" style="left:1346px;width:117px;text-align:center;top:470px;font-size:13.333px;font-weight:bold;color:#000">$0.00</div>
<div class="a" style="left:1464px;top:467px;width:16px;height:38px;background:#FDCAD2"></div>
<div class="a" style="left:615px;top:467px;width:1px;height:39px;background:#E3E3E3"></div>
<div class="a" style="left:755px;top:467px;width:1px;height:39px;background:#E3E3E3"></div>
<div class="a" style="left:873px;top:467px;width:1px;height:39px;background:#E3E3E3"></div>
<div class="a" style="left:991px;top:467px;width:1px;height:39px;background:#E3E3E3"></div>
<div class="a" style="left:1109px;top:467px;width:1px;height:39px;background:#E3E3E3"></div>
<div class="a" style="left:1227px;top:467px;width:1px;height:39px;background:#E3E3E3"></div>
<div class="a" style="left:1345px;top:467px;width:1px;height:39px;background:#E3E3E3"></div>
<div class="a" style="left:1463px;top:467px;width:1px;height:39px;background:#E3E3E3"></div>
<div class="a" style="left:84px;top:506px;width:125px;height:24px;background:#fff"></div>
<div class="a" style="left:84px;top:530px;width:1396px;height:1px;background:#E3E3E3"></div>
<div class="t" style="left:84px;width:42px;text-align:right;top:511px;font-size:13.333px;color:#8C8C8C">11</div>
<div class="a" style="left:190px;top:510px"><svg width="12" height="14" viewBox="0 0 12 14" ><path d="M3.8 7V4a2.2 2.2 0 0 1 4.4 0v3" fill="none" stroke="#3A78C4" stroke-width="1.6"/><rect x="1.3" y="6.6" width="9.4" height="6.6" rx="0.8" fill="#BCD3EE" stroke="#3A78C4" stroke-width="1.6"/><path d="M6 8.4a1.2 1.2 0 0 1 .7 2.2l.3 1.2H5l.3-1.2A1.2 1.2 0 0 1 6 8.4z" fill="#3A78C4"/></svg></div>
<div class="a" style="left:209px;top:506px;width:1px;height:25px;background:#E3E3E3"></div>
<div class="a" style="left:210px;top:506px;width:268px;height:24px;background:#FDE9EC"></div>
<div class="box" style="left:278px;top:510px"></div>
<div class="t" style="left:295px;top:509px;font-size:13.333px;line-height:15px;font-weight:bold;color:#000">Cash Receipts from</div>
<div class="a" style="left:480px;top:506px;width:135px;height:24px;background:#FDE9EC"></div>
<div class="t" style="left:480px;width:135px;text-align:center;top:509px;font-size:13.333px;font-weight:normal;color:#000">$73,300.00</div>
<div class="a" style="left:616px;top:506px;width:139px;height:24px;background:#FDE9EC"></div>
<div class="t" style="left:616px;width:139px;text-align:center;top:509px;font-size:13.333px;font-weight:normal;color:#000">$71,000.00</div>
<div class="a" style="left:756px;top:506px;width:117px;height:24px;background:#FDE9EC"></div>
<div class="t" style="left:756px;width:117px;text-align:center;top:509px;font-size:13.333px;font-weight:normal;color:#000">$0.00</div>
<div class="a" style="left:874px;top:506px;width:117px;height:24px;background:#FDE9EC"></div>
<div class="t" style="left:874px;width:117px;text-align:center;top:509px;font-size:13.333px;font-weight:normal;color:#000">$0.00</div>
<div class="a" style="left:992px;top:506px;width:117px;height:24px;background:#FDE9EC"></div>
<div class="t" style="left:992px;width:117px;text-align:center;top:509px;font-size:13.333px;font-weight:normal;color:#000">$0.00</div>
<div class="a" style="left:1110px;top:506px;width:117px;height:24px;background:#FDE9EC"></div>
<div class="t" style="left:1110px;width:117px;text-align:center;top:509px;font-size:13.333px;font-weight:normal;color:#000">$0.00</div>
<div class="a" style="left:1228px;top:506px;width:117px;height:24px;background:#FDE9EC"></div>
<div class="t" style="left:1228px;width:117px;text-align:center;top:509px;font-size:13.333px;font-weight:normal;color:#000">$0.00</div>
<div class="a" style="left:1346px;top:506px;width:117px;height:24px;background:#FDE9EC"></div>
<div class="t" style="left:1346px;width:117px;text-align:center;top:509px;font-size:13.333px;font-weight:normal;color:#000">$0.00</div>
<div class="a" style="left:1464px;top:506px;width:16px;height:24px;background:#FDE9EC"></div>
<div class="a" style="left:615px;top:506px;width:1px;height:25px;background:#E3E3E3"></div>
<div class="a" style="left:755px;top:506px;width:1px;height:25px;background:#E3E3E3"></div>
<div class="a" style="left:873px;top:506px;width:1px;height:25px;background:#E3E3E3"></div>
<div class="a" style="left:991px;top:506px;width:1px;height:25px;background:#E3E3E3"></div>
<div class="a" style="left:1109px;top:506px;width:1px;height:25px;background:#E3E3E3"></div>
<div class="a" style="left:1227px;top:506px;width:1px;height:25px;background:#E3E3E3"></div>
<div class="a" style="left:1345px;top:506px;width:1px;height:25px;background:#E3E3E3"></div>
<div class="a" style="left:1463px;top:506px;width:1px;height:25px;background:#E3E3E3"></div>
<div class="a" style="left:84px;top:531px;width:125px;height:24px;background:#fff"></div>
<div class="a" style="left:84px;top:555px;width:1396px;height:1px;background:#E3E3E3"></div>
<div class="t" style="left:84px;width:42px;text-align:right;top:536px;font-size:13.333px;color:#8C8C8C">12</div>
<div class="a" style="left:209px;top:531px;width:1px;height:25px;background:#E3E3E3"></div>
<div class="a" style="left:210px;top:531px;width:268px;height:24px;background:#FFFFFF"></div>
<div class="t" style="left:310px;top:534px;font-size:13.333px;line-height:15px;font-weight:normal;color:#000">Customers</div>
<div class="a" style="left:480px;top:531px;width:135px;height:24px;background:#FFFFFF"></div>
<div class="t" style="left:480px;width:135px;text-align:center;top:534px;font-size:13.333px;font-weight:normal;color:#000">$57,800.00</div>
<div class="a" style="left:616px;top:531px;width:139px;height:24px;background:#FFFFFF"></div>
<div class="t" style="left:616px;width:139px;text-align:center;top:534px;font-size:13.333px;font-weight:normal;color:#000">$56,500.00</div>
<div class="a" style="left:756px;top:531px;width:117px;height:24px;background:#FFFFFF"></div>
<div class="a" style="left:874px;top:531px;width:117px;height:24px;background:#FFFFFF"></div>
<div class="a" style="left:992px;top:531px;width:117px;height:24px;background:#FFFFFF"></div>
<div class="a" style="left:1110px;top:531px;width:117px;height:24px;background:#FFFFFF"></div>
<div class="a" style="left:1228px;top:531px;width:117px;height:24px;background:#FFFFFF"></div>
<div class="a" style="left:1346px;top:531px;width:117px;height:24px;background:#FFFFFF"></div>
<div class="a" style="left:1464px;top:531px;width:16px;height:24px;background:#FFFFFF"></div>
<div class="a" style="left:615px;top:531px;width:1px;height:25px;background:#E3E3E3"></div>
<div class="a" style="left:755px;top:531px;width:1px;height:25px;background:#E3E3E3"></div>
<div class="a" style="left:873px;top:531px;width:1px;height:25px;background:#E3E3E3"></div>
<div class="a" style="left:991px;top:531px;width:1px;height:25px;background:#E3E3E3"></div>
<div class="a" style="left:1109px;top:531px;width:1px;height:25px;background:#E3E3E3"></div>
<div class="a" style="left:1227px;top:531px;width:1px;height:25px;background:#E3E3E3"></div>
<div class="a" style="left:1345px;top:531px;width:1px;height:25px;background:#E3E3E3"></div>
<div class="a" style="left:1463px;top:531px;width:1px;height:25px;background:#E3E3E3"></div>
<div class="a" style="left:84px;top:556px;width:125px;height:24px;background:#fff"></div>
<div class="a" style="left:84px;top:580px;width:1396px;height:1px;background:#E3E3E3"></div>
<div class="t" style="left:84px;width:42px;text-align:right;top:561px;font-size:13.333px;color:#8C8C8C">13</div>
<div class="a" style="left:209px;top:556px;width:1px;height:25px;background:#E3E3E3"></div>
<div class="a" style="left:210px;top:556px;width:268px;height:24px;background:#FFFFFF"></div>
<div class="t" style="left:310px;top:559px;font-size:13.333px;line-height:15px;font-weight:normal;color:#000">Other Operations</div>
<div class="a" style="left:480px;top:556px;width:135px;height:24px;background:#FFFFFF"></div>
<div class="t" style="left:480px;width:135px;text-align:center;top:559px;font-size:13.333px;font-weight:normal;color:#000">$15,500.00</div>
<div class="a" style="left:616px;top:556px;width:139px;height:24px;background:#FFFFFF"></div>
<div class="t" style="left:616px;width:139px;text-align:center;top:559px;font-size:13.333px;font-weight:normal;color:#000">$14,500.00</div>
<div class="a" style="left:756px;top:556px;width:117px;height:24px;background:#FFFFFF"></div>
<div class="a" style="left:874px;top:556px;width:117px;height:24px;background:#FFFFFF"></div>
<div class="a" style="left:992px;top:556px;width:117px;height:24px;background:#FFFFFF"></div>
<div class="a" style="left:1110px;top:556px;width:117px;height:24px;background:#FFFFFF"></div>
<div class="a" style="left:1228px;top:556px;width:117px;height:24px;background:#FFFFFF"></div>
<div class="a" style="left:1346px;top:556px;width:117px;height:24px;background:#FFFFFF"></div>
<div class="a" style="left:1464px;top:556px;width:16px;height:24px;background:#FFFFFF"></div>
<div class="a" style="left:615px;top:556px;width:1px;height:25px;background:#E3E3E3"></div>
<div class="a" style="left:755px;top:556px;width:1px;height:25px;background:#E3E3E3"></div>
<div class="a" style="left:873px;top:556px;width:1px;height:25px;background:#E3E3E3"></div>
<div class="a" style="left:991px;top:556px;width:1px;height:25px;background:#E3E3E3"></div>
<div class="a" style="left:1109px;top:556px;width:1px;height:25px;background:#E3E3E3"></div>
<div class="a" style="left:1227px;top:556px;width:1px;height:25px;background:#E3E3E3"></div>
<div class="a" style="left:1345px;top:556px;width:1px;height:25px;background:#E3E3E3"></div>
<div class="a" style="left:1463px;top:556px;width:1px;height:25px;background:#E3E3E3"></div>
<div class="a" style="left:84px;top:581px;width:125px;height:24px;background:#fff"></div>
<div class="a" style="left:84px;top:605px;width:1396px;height:1px;background:#E3E3E3"></div>
<div class="t" style="left:84px;width:42px;text-align:right;top:586px;font-size:13.333px;color:#8C8C8C">14</div>
<div class="a" style="left:190px;top:585px"><svg width="12" height="14" viewBox="0 0 12 14" ><path d="M3.8 7V4a2.2 2.2 0 0 1 4.4 0v3" fill="none" stroke="#3A78C4" stroke-width="1.6"/><rect x="1.3" y="6.6" width="9.4" height="6.6" rx="0.8" fill="#BCD3EE" stroke="#3A78C4" stroke-width="1.6"/><path d="M6 8.4a1.2 1.2 0 0 1 .7 2.2l.3 1.2H5l.3-1.2A1.2 1.2 0 0 1 6 8.4z" fill="#3A78C4"/></svg></div>
<div class="a" style="left:209px;top:581px;width:1px;height:25px;background:#E3E3E3"></div>
<div class="a" style="left:210px;top:581px;width:268px;height:24px;background:#FDE9EC"></div>
<div class="box" style="left:278px;top:585px"></div>
<div class="t" style="left:295px;top:584px;font-size:13.333px;line-height:15px;font-weight:bold;color:#000">Cash Paid for</div>
<div class="a" style="left:480px;top:581px;width:135px;height:24px;background:#FDE9EC"></div>
<div class="t" style="left:480px;width:135px;text-align:center;top:584px;font-size:13.333px;font-weight:normal;color:#000">-$46,300.00</div>
<div class="a" style="left:616px;top:581px;width:139px;height:24px;background:#FDE9EC"></div>
<div class="t" style="left:616px;width:139px;text-align:center;top:584px;font-size:13.333px;font-weight:normal;color:#000">-$45,340.00</div>
<div class="a" style="left:756px;top:581px;width:117px;height:24px;background:#FDE9EC"></div>
<div class="t" style="left:756px;width:117px;text-align:center;top:584px;font-size:13.333px;font-weight:normal;color:#000">$0.00</div>
<div class="a" style="left:874px;top:581px;width:117px;height:24px;background:#FDE9EC"></div>
<div class="t" style="left:874px;width:117px;text-align:center;top:584px;font-size:13.333px;font-weight:normal;color:#000">$0.00</div>
<div class="a" style="left:992px;top:581px;width:117px;height:24px;background:#FDE9EC"></div>
<div class="t" style="left:992px;width:117px;text-align:center;top:584px;font-size:13.333px;font-weight:normal;color:#000">$0.00</div>
<div class="a" style="left:1110px;top:581px;width:117px;height:24px;background:#FDE9EC"></div>
<div class="t" style="left:1110px;width:117px;text-align:center;top:584px;font-size:13.333px;font-weight:normal;color:#000">$0.00</div>
<div class="a" style="left:1228px;top:581px;width:117px;height:24px;background:#FDE9EC"></div>
<div class="t" style="left:1228px;width:117px;text-align:center;top:584px;font-size:13.333px;font-weight:normal;color:#000">$0.00</div>
<div class="a" style="left:1346px;top:581px;width:117px;height:24px;background:#FDE9EC"></div>
<div class="t" style="left:1346px;width:117px;text-align:center;top:584px;font-size:13.333px;font-weight:normal;color:#000">$0.00</div>
<div class="a" style="left:1464px;top:581px;width:16px;height:24px;background:#FDE9EC"></div>
<div class="a" style="left:615px;top:581px;width:1px;height:25px;background:#E3E3E3"></div>
<div class="a" style="left:755px;top:581px;width:1px;height:25px;background:#E3E3E3"></div>
<div class="a" style="left:873px;top:581px;width:1px;height:25px;background:#E3E3E3"></div>
<div class="a" style="left:991px;top:581px;width:1px;height:25px;background:#E3E3E3"></div>
<div class="a" style="left:1109px;top:581px;width:1px;height:25px;background:#E3E3E3"></div>
<div class="a" style="left:1227px;top:581px;width:1px;height:25px;background:#E3E3E3"></div>
<div class="a" style="left:1345px;top:581px;width:1px;height:25px;background:#E3E3E3"></div>
<div class="a" style="left:1463px;top:581px;width:1px;height:25px;background:#E3E3E3"></div>
<div class="a" style="left:84px;top:606px;width:125px;height:24px;background:#fff"></div>
<div class="a" style="left:84px;top:630px;width:1396px;height:1px;background:#E3E3E3"></div>
<div class="t" style="left:84px;width:42px;text-align:right;top:611px;font-size:13.333px;color:#8C8C8C">15</div>
<div class="a" style="left:209px;top:606px;width:1px;height:25px;background:#E3E3E3"></div>
<div class="a" style="left:210px;top:606px;width:268px;height:24px;background:#FFFFFF"></div>
<div class="t" style="left:310px;top:609px;font-size:13.333px;line-height:15px;font-weight:normal;color:#000">Inventory Purchases</div>
<div class="a" style="left:480px;top:606px;width:135px;height:24px;background:#FFFFFF"></div>
<div class="t" style="left:480px;width:135px;text-align:center;top:609px;font-size:13.333px;font-weight:normal;color:#000">-$22,000.00</div>
<div class="a" style="left:616px;top:606px;width:139px;height:24px;background:#FFFFFF"></div>
<div class="t" style="left:616px;width:139px;text-align:center;top:609px;font-size:13.333px;font-weight:normal;color:#000">-$21,000.00</div>
<div class="a" style="left:756px;top:606px;width:117px;height:24px;background:#FFFFFF"></div>
<div class="a" style="left:874px;top:606px;width:117px;height:24px;background:#FFFFFF"></div>
<div class="a" style="left:992px;top:606px;width:117px;height:24px;background:#FFFFFF"></div>
<div class="a" style="left:1110px;top:606px;width:117px;height:24px;background:#FFFFFF"></div>
<div class="a" style="left:1228px;top:606px;width:117px;height:24px;background:#FFFFFF"></div>
<div class="a" style="left:1346px;top:606px;width:117px;height:24px;background:#FFFFFF"></div>
<div class="a" style="left:1464px;top:606px;width:16px;height:24px;background:#FFFFFF"></div>
<div class="a" style="left:615px;top:606px;width:1px;height:25px;background:#E3E3E3"></div>
<div class="a" style="left:755px;top:606px;width:1px;height:25px;background:#E3E3E3"></div>
<div class="a" style="left:873px;top:606px;width:1px;height:25px;background:#E3E3E3"></div>
<div class="a" style="left:991px;top:606px;width:1px;height:25px;background:#E3E3E3"></div>
<div class="a" style="left:1109px;top:606px;width:1px;height:25px;background:#E3E3E3"></div>
<div class="a" style="left:1227px;top:606px;width:1px;height:25px;background:#E3E3E3"></div>
<div class="a" style="left:1345px;top:606px;width:1px;height:25px;background:#E3E3E3"></div>
<div class="a" style="left:1463px;top:606px;width:1px;height:25px;background:#E3E3E3"></div>
<div class="a" style="left:84px;top:631px;width:125px;height:38px;background:#fff"></div>
<div class="a" style="left:84px;top:669px;width:1396px;height:1px;background:#E3E3E3"></div>
<div class="t" style="left:84px;width:42px;text-align:right;top:636px;font-size:13.333px;color:#8C8C8C">16</div>
<div class="a" style="left:209px;top:631px;width:1px;height:39px;background:#E3E3E3"></div>
<div class="a" style="left:210px;top:631px;width:268px;height:38px;background:#FFFFFF"></div>
<div class="t" style="left:310px;top:634px;font-size:13.333px;line-height:15px;font-weight:normal;color:#000">General Operating &amp;<br>Administrative Expenses</div>
<div class="a" style="left:480px;top:631px;width:135px;height:38px;background:#FFFFFF"></div>
<div class="t" style="left:480px;width:135px;text-align:center;top:634px;font-size:13.333px;font-weight:normal;color:#000">-$9,500.00</div>
<div class="a" style="left:616px;top:631px;width:139px;height:38px;background:#FFFFFF"></div>
<div class="t" style="left:616px;width:139px;text-align:center;top:634px;font-size:13.333px;font-weight:normal;color:#000">-$9,200.00</div>
<div class="a" style="left:756px;top:631px;width:117px;height:38px;background:#FFFFFF"></div>
<div class="a" style="left:874px;top:631px;width:117px;height:38px;background:#FFFFFF"></div>
<div class="a" style="left:992px;top:631px;width:117px;height:38px;background:#FFFFFF"></div>
<div class="a" style="left:1110px;top:631px;width:117px;height:38px;background:#FFFFFF"></div>
<div class="a" style="left:1228px;top:631px;width:117px;height:38px;background:#FFFFFF"></div>
<div class="a" style="left:1346px;top:631px;width:117px;height:38px;background:#FFFFFF"></div>
<div class="a" style="left:1464px;top:631px;width:16px;height:38px;background:#FFFFFF"></div>
<div class="a" style="left:615px;top:631px;width:1px;height:39px;background:#E3E3E3"></div>
<div class="a" style="left:755px;top:631px;width:1px;height:39px;background:#E3E3E3"></div>
<div class="a" style="left:873px;top:631px;width:1px;height:39px;background:#E3E3E3"></div>
<div class="a" style="left:991px;top:631px;width:1px;height:39px;background:#E3E3E3"></div>
<div class="a" style="left:1109px;top:631px;width:1px;height:39px;background:#E3E3E3"></div>
<div class="a" style="left:1227px;top:631px;width:1px;height:39px;background:#E3E3E3"></div>
<div class="a" style="left:1345px;top:631px;width:1px;height:39px;background:#E3E3E3"></div>
<div class="a" style="left:1463px;top:631px;width:1px;height:39px;background:#E3E3E3"></div>
<div class="a" style="left:84px;top:670px;width:125px;height:24px;background:#fff"></div>
<div class="a" style="left:84px;top:694px;width:1396px;height:1px;background:#E3E3E3"></div>
<div class="t" style="left:84px;width:42px;text-align:right;top:675px;font-size:13.333px;color:#8C8C8C">17</div>
<div class="a" style="left:209px;top:670px;width:1px;height:25px;background:#E3E3E3"></div>
<div class="a" style="left:210px;top:670px;width:268px;height:24px;background:#FFFFFF"></div>
<div class="t" style="left:310px;top:673px;font-size:13.333px;line-height:15px;font-weight:normal;color:#000">Wage Expenses</div>
<div class="a" style="left:480px;top:670px;width:135px;height:24px;background:#FFFFFF"></div>
<div class="t" style="left:480px;width:135px;text-align:center;top:673px;font-size:13.333px;font-weight:normal;color:#000">-$10,200.00</div>
<div class="a" style="left:616px;top:670px;width:139px;height:24px;background:#FFFFFF"></div>
<div class="t" style="left:616px;width:139px;text-align:center;top:673px;font-size:13.333px;font-weight:normal;color:#000">-$10,250.00</div>
<div class="a" style="left:756px;top:670px;width:117px;height:24px;background:#FFFFFF"></div>
<div class="a" style="left:874px;top:670px;width:117px;height:24px;background:#FFFFFF"></div>
<div class="a" style="left:992px;top:670px;width:117px;height:24px;background:#FFFFFF"></div>
<div class="a" style="left:1110px;top:670px;width:117px;height:24px;background:#FFFFFF"></div>
<div class="a" style="left:1228px;top:670px;width:117px;height:24px;background:#FFFFFF"></div>
<div class="a" style="left:1346px;top:670px;width:117px;height:24px;background:#FFFFFF"></div>
<div class="a" style="left:1464px;top:670px;width:16px;height:24px;background:#FFFFFF"></div>
<div class="a" style="left:615px;top:670px;width:1px;height:25px;background:#E3E3E3"></div>
<div class="a" style="left:755px;top:670px;width:1px;height:25px;background:#E3E3E3"></div>
<div class="a" style="left:873px;top:670px;width:1px;height:25px;background:#E3E3E3"></div>
<div class="a" style="left:991px;top:670px;width:1px;height:25px;background:#E3E3E3"></div>
<div class="a" style="left:1109px;top:670px;width:1px;height:25px;background:#E3E3E3"></div>
<div class="a" style="left:1227px;top:670px;width:1px;height:25px;background:#E3E3E3"></div>
<div class="a" style="left:1345px;top:670px;width:1px;height:25px;background:#E3E3E3"></div>
<div class="a" style="left:1463px;top:670px;width:1px;height:25px;background:#E3E3E3"></div>
<div class="a" style="left:84px;top:695px;width:125px;height:24px;background:#fff"></div>
<div class="a" style="left:84px;top:719px;width:1396px;height:1px;background:#E3E3E3"></div>
<div class="t" style="left:84px;width:42px;text-align:right;top:700px;font-size:13.333px;color:#8C8C8C">18</div>
<div class="a" style="left:209px;top:695px;width:1px;height:25px;background:#E3E3E3"></div>
<div class="a" style="left:210px;top:695px;width:268px;height:24px;background:#FFFFFF"></div>
<div class="t" style="left:310px;top:698px;font-size:13.333px;line-height:15px;font-weight:normal;color:#000">Interest</div>
<div class="a" style="left:480px;top:695px;width:135px;height:24px;background:#FFFFFF"></div>
<div class="t" style="left:480px;width:135px;text-align:center;top:698px;font-size:13.333px;font-weight:normal;color:#000">-$1,100.00</div>
<div class="a" style="left:616px;top:695px;width:139px;height:24px;background:#FFFFFF"></div>
<div class="t" style="left:616px;width:139px;text-align:center;top:698px;font-size:13.333px;font-weight:normal;color:#000">-$1,175.00</div>
<div class="a" style="left:756px;top:695px;width:117px;height:24px;background:#FFFFFF"></div>
<div class="a" style="left:874px;top:695px;width:117px;height:24px;background:#FFFFFF"></div>
<div class="a" style="left:992px;top:695px;width:117px;height:24px;background:#FFFFFF"></div>
<div class="a" style="left:1110px;top:695px;width:117px;height:24px;background:#FFFFFF"></div>
<div class="a" style="left:1228px;top:695px;width:117px;height:24px;background:#FFFFFF"></div>
<div class="a" style="left:1346px;top:695px;width:117px;height:24px;background:#FFFFFF"></div>
<div class="a" style="left:1464px;top:695px;width:16px;height:24px;background:#FFFFFF"></div>
<div class="a" style="left:615px;top:695px;width:1px;height:25px;background:#E3E3E3"></div>
<div class="a" style="left:755px;top:695px;width:1px;height:25px;background:#E3E3E3"></div>
<div class="a" style="left:873px;top:695px;width:1px;height:25px;background:#E3E3E3"></div>
<div class="a" style="left:991px;top:695px;width:1px;height:25px;background:#E3E3E3"></div>
<div class="a" style="left:1109px;top:695px;width:1px;height:25px;background:#E3E3E3"></div>
<div class="a" style="left:1227px;top:695px;width:1px;height:25px;background:#E3E3E3"></div>
<div class="a" style="left:1345px;top:695px;width:1px;height:25px;background:#E3E3E3"></div>
<div class="a" style="left:1463px;top:695px;width:1px;height:25px;background:#E3E3E3"></div>
<div class="a" style="left:84px;top:720px;width:125px;height:24px;background:#fff"></div>
<div class="a" style="left:84px;top:744px;width:1396px;height:1px;background:#E3E3E3"></div>
<div class="t" style="left:84px;width:42px;text-align:right;top:725px;font-size:13.333px;color:#8C8C8C">19</div>
<div class="a" style="left:209px;top:720px;width:1px;height:25px;background:#E3E3E3"></div>
<div class="a" style="left:210px;top:720px;width:268px;height:24px;background:#FFFFFF"></div>
<div class="t" style="left:310px;top:723px;font-size:13.333px;line-height:15px;font-weight:normal;color:#000">Income Taxes</div>
<div class="a" style="left:480px;top:720px;width:135px;height:24px;background:#FFFFFF"></div>
<div class="t" style="left:480px;width:135px;text-align:center;top:723px;font-size:13.333px;font-weight:normal;color:#000">-$2,850.00</div>
<div class="a" style="left:616px;top:720px;width:139px;height:24px;background:#FFFFFF"></div>
<div class="t" style="left:616px;width:139px;text-align:center;top:723px;font-size:13.333px;font-weight:normal;color:#000">-$3,000.00</div>
<div class="a" style="left:756px;top:720px;width:117px;height:24px;background:#FFFFFF"></div>
<div class="a" style="left:874px;top:720px;width:117px;height:24px;background:#FFFFFF"></div>
<div class="a" style="left:992px;top:720px;width:117px;height:24px;background:#FFFFFF"></div>
<div class="a" style="left:1110px;top:720px;width:117px;height:24px;background:#FFFFFF"></div>
<div class="a" style="left:1228px;top:720px;width:117px;height:24px;background:#FFFFFF"></div>
<div class="a" style="left:1346px;top:720px;width:117px;height:24px;background:#FFFFFF"></div>
<div class="a" style="left:1464px;top:720px;width:16px;height:24px;background:#FFFFFF"></div>
<div class="a" style="left:615px;top:720px;width:1px;height:25px;background:#E3E3E3"></div>
<div class="a" style="left:755px;top:720px;width:1px;height:25px;background:#E3E3E3"></div>
<div class="a" style="left:873px;top:720px;width:1px;height:25px;background:#E3E3E3"></div>
<div class="a" style="left:991px;top:720px;width:1px;height:25px;background:#E3E3E3"></div>
<div class="a" style="left:1109px;top:720px;width:1px;height:25px;background:#E3E3E3"></div>
<div class="a" style="left:1227px;top:720px;width:1px;height:25px;background:#E3E3E3"></div>
<div class="a" style="left:1345px;top:720px;width:1px;height:25px;background:#E3E3E3"></div>
<div class="a" style="left:1463px;top:720px;width:1px;height:25px;background:#E3E3E3"></div>
<div class="a" style="left:84px;top:745px;width:125px;height:24px;background:#fff"></div>
<div class="a" style="left:84px;top:769px;width:1396px;height:1px;background:#E3E3E3"></div>
<div class="t" style="left:84px;width:42px;text-align:right;top:750px;font-size:13.333px;color:#8C8C8C">20</div>
<div class="a" style="left:209px;top:745px;width:1px;height:25px;background:#E3E3E3"></div>
<div class="a" style="left:210px;top:745px;width:268px;height:24px;background:#FFFFFF"></div>
<div class="t" style="left:310px;top:748px;font-size:13.333px;line-height:15px;font-weight:normal;color:#000">Other</div>
<div class="a" style="left:480px;top:745px;width:135px;height:24px;background:#FFFFFF"></div>
<div class="t" style="left:480px;width:135px;text-align:center;top:748px;font-size:13.333px;font-weight:normal;color:#000">-$650.00</div>
<div class="a" style="left:616px;top:745px;width:139px;height:24px;background:#FFFFFF"></div>
<div class="t" style="left:616px;width:139px;text-align:center;top:748px;font-size:13.333px;font-weight:normal;color:#000">-$715.00</div>
<div class="a" style="left:756px;top:745px;width:117px;height:24px;background:#FFFFFF"></div>
<div class="a" style="left:874px;top:745px;width:117px;height:24px;background:#FFFFFF"></div>
<div class="a" style="left:992px;top:745px;width:117px;height:24px;background:#FFFFFF"></div>
<div class="a" style="left:1110px;top:745px;width:117px;height:24px;background:#FFFFFF"></div>
<div class="a" style="left:1228px;top:745px;width:117px;height:24px;background:#FFFFFF"></div>
<div class="a" style="left:1346px;top:745px;width:117px;height:24px;background:#FFFFFF"></div>
<div class="a" style="left:1464px;top:745px;width:16px;height:24px;background:#FFFFFF"></div>
<div class="a" style="left:615px;top:745px;width:1px;height:25px;background:#E3E3E3"></div>
<div class="a" style="left:755px;top:745px;width:1px;height:25px;background:#E3E3E3"></div>
<div class="a" style="left:873px;top:745px;width:1px;height:25px;background:#E3E3E3"></div>
<div class="a" style="left:991px;top:745px;width:1px;height:25px;background:#E3E3E3"></div>
<div class="a" style="left:1109px;top:745px;width:1px;height:25px;background:#E3E3E3"></div>
<div class="a" style="left:1227px;top:745px;width:1px;height:25px;background:#E3E3E3"></div>
<div class="a" style="left:1345px;top:745px;width:1px;height:25px;background:#E3E3E3"></div>
<div class="a" style="left:1463px;top:745px;width:1px;height:25px;background:#E3E3E3"></div>
<div class="a" style="left:84px;top:770px;width:125px;height:24px;background:#fff"></div>
<div class="a" style="left:84px;top:794px;width:1396px;height:1px;background:#E3E3E3"></div>
<div class="t" style="left:84px;width:42px;text-align:right;top:775px;font-size:13.333px;color:#8C8C8C">21</div>
<div class="a" style="left:209px;top:770px;width:1px;height:25px;background:#E3E3E3"></div>
<div class="a" style="left:210px;top:770px;width:268px;height:24px;background:#991310"></div>
<div class="box" style="left:248px;top:774px"></div>
<div class="t" style="left:265px;top:773px;font-size:13.333px;line-height:15px;font-weight:bold;color:#fff">INVESTING ACTIVITIES</div>
<div class="a" style="left:480px;top:770px;width:135px;height:24px;background:#991310"></div>
<div class="t" style="left:480px;width:135px;text-align:center;top:773px;font-size:13.333px;font-weight:normal;color:#fff">JAN</div>
<div class="a" style="left:616px;top:770px;width:139px;height:24px;background:#991310"></div>
<div class="t" style="left:616px;width:139px;text-align:center;top:773px;font-size:13.333px;font-weight:normal;color:#fff">FEB</div>
<div class="a" style="left:756px;top:770px;width:117px;height:24px;background:#991310"></div>
<div class="t" style="left:756px;width:117px;text-align:center;top:773px;font-size:13.333px;font-weight:normal;color:#fff">MAR</div>
<div class="a" style="left:874px;top:770px;width:117px;height:24px;background:#991310"></div>
<div class="t" style="left:874px;width:117px;text-align:center;top:773px;font-size:13.333px;font-weight:normal;color:#fff">APR</div>
<div class="a" style="left:992px;top:770px;width:117px;height:24px;background:#991310"></div>
<div class="t" style="left:992px;width:117px;text-align:center;top:773px;font-size:13.333px;font-weight:normal;color:#fff">MAY</div>
<div class="a" style="left:1110px;top:770px;width:117px;height:24px;background:#991310"></div>
<div class="t" style="left:1110px;width:117px;text-align:center;top:773px;font-size:13.333px;font-weight:normal;color:#fff">JUN</div>
<div class="a" style="left:1228px;top:770px;width:117px;height:24px;background:#991310"></div>
<div class="t" style="left:1228px;width:117px;text-align:center;top:773px;font-size:13.333px;font-weight:normal;color:#fff">JUL</div>
<div class="a" style="left:1346px;top:770px;width:117px;height:24px;background:#991310"></div>
<div class="t" style="left:1346px;width:117px;text-align:center;top:773px;font-size:13.333px;font-weight:normal;color:#fff">AUG</div>
<div class="a" style="left:1464px;top:770px;width:16px;height:24px;background:#991310"></div>
<div class="a" style="left:615px;top:770px;width:1px;height:25px;background:#E3E3E3"></div>
<div class="a" style="left:755px;top:770px;width:1px;height:25px;background:#E3E3E3"></div>
<div class="a" style="left:873px;top:770px;width:1px;height:25px;background:#E3E3E3"></div>
<div class="a" style="left:991px;top:770px;width:1px;height:25px;background:#E3E3E3"></div>
<div class="a" style="left:1109px;top:770px;width:1px;height:25px;background:#E3E3E3"></div>
<div class="a" style="left:1227px;top:770px;width:1px;height:25px;background:#E3E3E3"></div>
<div class="a" style="left:1345px;top:770px;width:1px;height:25px;background:#E3E3E3"></div>
<div class="a" style="left:1463px;top:770px;width:1px;height:25px;background:#E3E3E3"></div>
<div class="a" style="left:84px;top:795px;width:125px;height:38px;background:#fff"></div>
<div class="a" style="left:84px;top:833px;width:1396px;height:1px;background:#E3E3E3"></div>
<div class="t" style="left:84px;width:42px;text-align:right;top:800px;font-size:13.333px;color:#8C8C8C">22</div>
<div class="a" style="left:190px;top:799px"><svg width="12" height="14" viewBox="0 0 12 14" ><path d="M3.8 7V4a2.2 2.2 0 0 1 4.4 0v3" fill="none" stroke="#3A78C4" stroke-width="1.6"/><rect x="1.3" y="6.6" width="9.4" height="6.6" rx="0.8" fill="#BCD3EE" stroke="#3A78C4" stroke-width="1.6"/><path d="M6 8.4a1.2 1.2 0 0 1 .7 2.2l.3 1.2H5l.3-1.2A1.2 1.2 0 0 1 6 8.4z" fill="#3A78C4"/></svg></div>
<div class="a" style="left:209px;top:795px;width:1px;height:39px;background:#E3E3E3"></div>
<div class="a" style="left:210px;top:795px;width:268px;height:38px;background:#FDCAD2"></div>
<div class="box" style="left:263px;top:799px"></div>
<div class="t" style="left:280px;top:798px;font-size:13.333px;line-height:15px;font-weight:bold;color:#000">Net Cash Flow From Investing<br>Activities</div>
<div class="a" style="left:480px;top:795px;width:135px;height:38px;background:#FDCAD2"></div>
<div class="t" style="left:480px;width:135px;text-align:center;top:798px;font-size:13.333px;font-weight:bold;color:#000">-$3,450.00</div>
<div class="a" style="left:616px;top:795px;width:139px;height:38px;background:#FDCAD2"></div>
<div class="t" style="left:616px;width:139px;text-align:center;top:798px;font-size:13.333px;font-weight:bold;color:#000">-$4,350.00</div>
<div class="a" style="left:756px;top:795px;width:117px;height:38px;background:#FDCAD2"></div>
<div class="t" style="left:756px;width:117px;text-align:center;top:798px;font-size:13.333px;font-weight:bold;color:#000">$0.00</div>
<div class="a" style="left:874px;top:795px;width:117px;height:38px;background:#FDCAD2"></div>
<div class="t" style="left:874px;width:117px;text-align:center;top:798px;font-size:13.333px;font-weight:bold;color:#000">$0.00</div>
<div class="a" style="left:992px;top:795px;width:117px;height:38px;background:#FDCAD2"></div>
<div class="t" style="left:992px;width:117px;text-align:center;top:798px;font-size:13.333px;font-weight:bold;color:#000">$0.00</div>
<div class="a" style="left:1110px;top:795px;width:117px;height:38px;background:#FDCAD2"></div>
<div class="t" style="left:1110px;width:117px;text-align:center;top:798px;font-size:13.333px;font-weight:bold;color:#000">$0.00</div>
<div class="a" style="left:1228px;top:795px;width:117px;height:38px;background:#FDCAD2"></div>
<div class="t" style="left:1228px;width:117px;text-align:center;top:798px;font-size:13.333px;font-weight:bold;color:#000">$0.00</div>
<div class="a" style="left:1346px;top:795px;width:117px;height:38px;background:#FDCAD2"></div>
<div class="t" style="left:1346px;width:117px;text-align:center;top:798px;font-size:13.333px;font-weight:bold;color:#000">$0.00</div>
<div class="a" style="left:1464px;top:795px;width:16px;height:38px;background:#FDCAD2"></div>
<div class="a" style="left:615px;top:795px;width:1px;height:39px;background:#E3E3E3"></div>
<div class="a" style="left:755px;top:795px;width:1px;height:39px;background:#E3E3E3"></div>
<div class="a" style="left:873px;top:795px;width:1px;height:39px;background:#E3E3E3"></div>
<div class="a" style="left:991px;top:795px;width:1px;height:39px;background:#E3E3E3"></div>
<div class="a" style="left:1109px;top:795px;width:1px;height:39px;background:#E3E3E3"></div>
<div class="a" style="left:1227px;top:795px;width:1px;height:39px;background:#E3E3E3"></div>
<div class="a" style="left:1345px;top:795px;width:1px;height:39px;background:#E3E3E3"></div>
<div class="a" style="left:1463px;top:795px;width:1px;height:39px;background:#E3E3E3"></div>
<div class="a" style="left:478px;top:158px;width:2px;height:694px;background:#BEBEC2"></div>
<div class="a" style="left:480px;top:239px;width:5px;height:613px;background:linear-gradient(to right,rgba(0,0,0,0.07),rgba(0,0,0,0))"></div>
<div class="a" style="left:60px;top:845px;width:23px;height:16px;border:1px solid #D8D8D8;background:#F7F6F4"></div>
<svg width="12" height="12" viewBox="0 0 12 12" class="a" style="left:66px;top:848px"><path d="M0.7 4.2V0.7h3.5M0.7 0.7l4 4M11.3 4.2V0.7H7.8M11.3 0.7l-4 4M0.7 7.8v3.5h3.5M0.7 11.3l4-4M11.3 7.8v3.5H7.8M11.3 11.3l-4-4" stroke="#333" stroke-width="1.3" fill="none"/></svg>
<div class="a" style="left:1525px;top:144px;width:52px;height:581px;background:#fff;box-shadow:-3px 3px 10px rgba(0,0,0,0.10)"></div>
<svg width="20" height="18" viewBox="0 0 20 18" class="a" style="left:1541px;top:162px"><path d="M1 1h18v13H7l-2.5 2.5V14H1z" fill="none" stroke="#444" stroke-width="1.6" stroke-linejoin="round"/></svg>
<svg width="20" height="20" viewBox="0 0 20 20" class="a" style="left:1541px;top:208px"><path d="M9.9 15.76L7.73 17.93A4 4 0 0 1 2.07 12.27L12.27 2.07A4 4 0 0 1 17.93 7.73L13.2 12.46A2.53 2.53 0 0 1 9.62 8.88L13.3 5.2" fill="none" stroke="#444" stroke-width="1.6" stroke-linecap="round"/></svg>
<svg width="20" height="21" viewBox="0 0 20 21" class="a" style="left:1541px;top:255px"><path d="M5 1h10M3.5 3.7h13" stroke="#444" stroke-width="1.5"/><path d="M1 7h18v9.5l-3.5 3.5H1z" fill="none" stroke="#444" stroke-width="1.6" stroke-linejoin="round"/><path d="M19 16.5h-3.5V20" fill="none" stroke="#444" stroke-width="1.5"/></svg>
<svg width="20" height="20" viewBox="0 0 20 20" class="a" style="left:1541px;top:304px"><path d="M11.5 17.9A8 8 0 0 1 5.2 3.2" fill="none" stroke="#444" stroke-width="1.6"/><path d="M1.5 3.6L5.2 3l.5 3.8" fill="none" stroke="#444" stroke-width="1.6"/><path d="M8.5 2.1A8 8 0 0 1 15.3 16.4" fill="none" stroke="#444" stroke-width="1.6"/><path d="M14.5 12.5l.8 3.9 3.6-.5" fill="none" stroke="#444" stroke-width="1.6"/><path d="M7 10l2.5 2.5 3.5-4" fill="none" stroke="#444" stroke-width="1.6"/></svg>
<svg width="20" height="21" viewBox="0 0 20 21" class="a" style="left:1541px;top:352px"><path d="M2.5 1h9.5l4.5 4.5V20h-14z" fill="none" stroke="#444" stroke-width="1.6" stroke-linejoin="round"/><path d="M11.5 1v5h5" fill="none" stroke="#444" stroke-width="1.5"/><path d="M9.5 17.5v-7M6.5 13l3-3 3 3" fill="none" stroke="#444" stroke-width="1.6"/></svg>
<svg width="20" height="20" viewBox="0 0 20 20" class="a" style="left:1541px;top:400px"><circle cx="10" cy="10" r="9" fill="none" stroke="#444" stroke-width="1.6"/><path d="M3 10h3.5l2-3 2.5 6 2-3H17" fill="none" stroke="#444" stroke-width="1.5"/></svg>
<svg width="20" height="21" viewBox="0 0 20 21" class="a" style="left:1541px;top:447px"><path d="M5 1h15v14l-5 5H5z" fill="none" stroke="#444" stroke-width="1.6" stroke-linejoin="round"/><path d="M20 15h-5v5" fill="none" stroke="#444" stroke-width="1.5"/><rect x="0.8" y="4" width="7" height="12.5" rx="1" fill="#fff" stroke="#444" stroke-width="1.5"/><path d="M3 7.5h3M3 10h3M3 12.5h3" stroke="#444" stroke-width="1.3"/></svg>
<svg width="20" height="21" viewBox="0 0 20 21" class="a" style="left:1541px;top:494px"><path d="M10 1C5.3 1 2 4.3 2 8.5c0 3.2 2.8 5.8 5.6 7.5h4.8c2.8-1.7 5.6-4.3 5.6-7.5C18 4.3 14.7 1 10 1z" fill="#3DB4F2"/><path d="M10 1.2c-2 0-3.4 3.2-3.4 7 0 3.2 1.5 5.8 2.8 7.8M10 1.2c2 0 3.4 3.2 3.4 7 0 3.2-1.5 5.8-2.8 7.8" fill="none" stroke="#fff" stroke-width="1.1"/><rect x="8" y="16.5" width="4" height="3.5" rx="1" fill="#3DB4F2"/></svg>
<svg width="20" height="20" viewBox="0 0 20 20" class="a" style="left:1541px;top:543px"><rect x="1" y="1" width="18" height="18" fill="none" stroke="#444" stroke-width="1.6"/><path d="M6 15v-5M9 15V5.5M12 15V8M15 15v-3" stroke="#444" stroke-width="1.5"/></svg>
<div class="a" style="left:1538px;top:578px;width:26px;height:1px;background:#DDDDDD"></div>
<svg width="14" height="14" viewBox="0 0 14 14" class="a" style="left:1544px;top:597px"><rect x="0" y="0" width="6.3" height="6.3" fill="#8A8A8A"/><rect x="7.6" y="0" width="6.3" height="6.3" fill="#8A8A8A"/><rect x="0" y="7.6" width="6.3" height="6.3" fill="#8A8A8A"/><rect x="7.6" y="7.6" width="6.3" height="6.3" fill="#8A8A8A"/></svg>
<svg width="15" height="15" viewBox="0 0 15 15" class="a" style="left:1543px;top:644px"><path d="M7.5 0.5L14 0.5L14 7.0L12 5.5L12 2.5L9 2.5ZM4.5 3.5L11 3.5L11 10.0L9 8.5L9 5.5L6 5.5ZM1.5 6.5L8 6.5L8 13.0L6 11.5L6 8.5L3 8.5Z" fill="#8A8A8A"/></svg>
<svg width="17" height="11" viewBox="0 0 17 11" class="a" style="left:1543px;top:694px"><path d="M4 10.5C1.8 10.5 0.5 9 0.5 7.3c0-1.5 1-2.6 2.3-2.9C3.2 2.3 5 1 6.8 1.8 7.8.7 9.5.4 10.8 1.3c1.6-.4 3.2.8 3.4 2.4 1.6.5 2.3 1.8 2.1 3.3-.2 1.8-1.8 3-3.5 2.8-.9 1-2.3 1.2-3.4.6-1 .9-2.6 1-3.6.2C5.3 10.3 4.7 10.5 4 10.5z" fill="#8A8A8A"/></svg>
<div class="a" style="left:0;top:0;width:60px;height:861px;background:#0B2E5C"></div>
<svg width="19" height="19" viewBox="0 0 19 19" class="a" style="left:19px;top:21px"><path d="M1 18.2V8L9.5 1 18 8v10.2z" fill="none" stroke="#fff" stroke-width="1.7" stroke-linejoin="miter"/></svg>
<svg width="19" height="21" viewBox="0 0 19 21" class="a" style="left:19px;top:76px"><path d="M2.7 13.5V8.1A6.3 6.3 0 0 1 15.3 8.1V13.5L17 15.6Q17.5 16.8 16.2 16.8H1.8Q.5 16.8 1 15.6Z" fill="none" stroke="#fff" stroke-width="1.7" stroke-linejoin="round"/><path d="M6.7 19.8h4.6" stroke="#fff" stroke-width="1.7"/></svg>
<div class="a" style="left:30px;top:69px;width:18px;height:14px;border-radius:7px;background:#D9461E"></div>
<div class="t" style="left:30px;width:18px;text-align:center;top:69px;font-size:9.5px;font-weight:bold;color:#fff;line-height:14px;letter-spacing:-0.2px">29</div>
<svg width="21" height="18" viewBox="0 0 21 18" class="a" style="left:18px;top:134px"><path d="M1 1.2h7l2 2.5h10v13.5H1z" fill="none" stroke="#fff" stroke-width="1.7" stroke-linejoin="miter"/></svg>
<svg width="21" height="21" viewBox="0 0 21 21" class="a" style="left:18px;top:188px"><circle cx="10.5" cy="10.5" r="9.3" fill="none" stroke="#fff" stroke-width="1.8"/><path d="M10 5v6h4.5" fill="none" stroke="#fff" stroke-width="1.8"/></svg>
<svg width="21" height="21" viewBox="0 0 21 21" class="a" style="left:18px;top:244px"><path d="M10.5 1.5l2.6 5.6 6.1.7-4.5 4.2 1.2 6L10.5 15l-5.4 3 1.2-6-4.5-4.2 6.1-.7z" fill="none" stroke="#fff" stroke-width="1.7" stroke-linejoin="miter"/></svg>
<svg width="18" height="18" viewBox="0 0 18 18" class="a" style="left:19px;top:302px"><path d="M9 1v16M1 9h16" stroke="#fff" stroke-width="3"/></svg>
<svg width="21" height="21" viewBox="0 0 21 21" class="a" style="left:18px;top:699px"><rect x="0.0" y="0.0" width="5.2" height="5.2" rx="0.6" fill="#fff"/><rect x="7.5" y="0.0" width="5.2" height="5.2" rx="0.6" fill="#fff"/><rect x="15.0" y="0.0" width="5.2" height="5.2" rx="0.6" fill="#fff"/><rect x="0.0" y="7.5" width="5.2" height="5.2" rx="0.6" fill="#fff"/><rect x="7.5" y="7.5" width="5.2" height="5.2" rx="0.6" fill="#fff"/><rect x="15.0" y="7.5" width="5.2" height="5.2" rx="0.6" fill="#fff"/><rect x="0.0" y="15.0" width="5.2" height="5.2" rx="0.6" fill="#fff"/><rect x="7.5" y="15.0" width="5.2" height="5.2" rx="0.6" fill="#fff"/><rect x="15.0" y="15.0" width="5.2" height="5.2" rx="0.6" fill="#fff"/></svg>
<svg width="21" height="21" viewBox="0 0 21 21" class="a" style="left:18px;top:755px"><circle cx="10.5" cy="10.5" r="9.3" fill="none" stroke="#fff" stroke-width="1.7"/><path d="M7.6 8.2a2.9 2.9 0 1 1 4.3 2.5c-.9.5-1.4 1-1.4 2v.6" fill="none" stroke="#fff" stroke-width="1.7"/><circle cx="10.5" cy="15.6" r="1.1" fill="#fff"/></svg>
<div class="a" style="left:12px;top:806px;width:32px;height:32px;border-radius:50%;overflow:hidden;background:#A48659"><svg width="32" height="32" viewBox="0 0 32 32" ><rect width="32" height="32" fill="#A3845A"/><rect x="23" y="0" width="9" height="32" fill="#B09566"/><path d="M7 24C5 16 6 5 15 4.5 24 4 25.5 14 24 24z" fill="#D8BF8A"/><ellipse cx="15.5" cy="12.5" rx="4.6" ry="6.2" fill="#E6B391"/><rect x="13" y="17" width="5" height="7" fill="#DCA784"/><path d="M2 32C3 25 7 21.5 12 21.5L16.5 32z" fill="#E51D2B"/><path d="M30 32C29 26 26 23 20.5 23L17.5 32z" fill="#E51D2B"/><path d="M12 21.5L17.5 32 20.5 23z" fill="#E51D2B"/><path d="M18.5 25.5h2.5l1.5 6.5h-3z" fill="#F1ECE3"/></svg></div>
<div class="a" style="left:1572px;top:856px;width:5px;height:5px;background:radial-gradient(circle at 0 0,rgba(0,0,0,0) 5px,#111 6px)"></div>
</body></html>
